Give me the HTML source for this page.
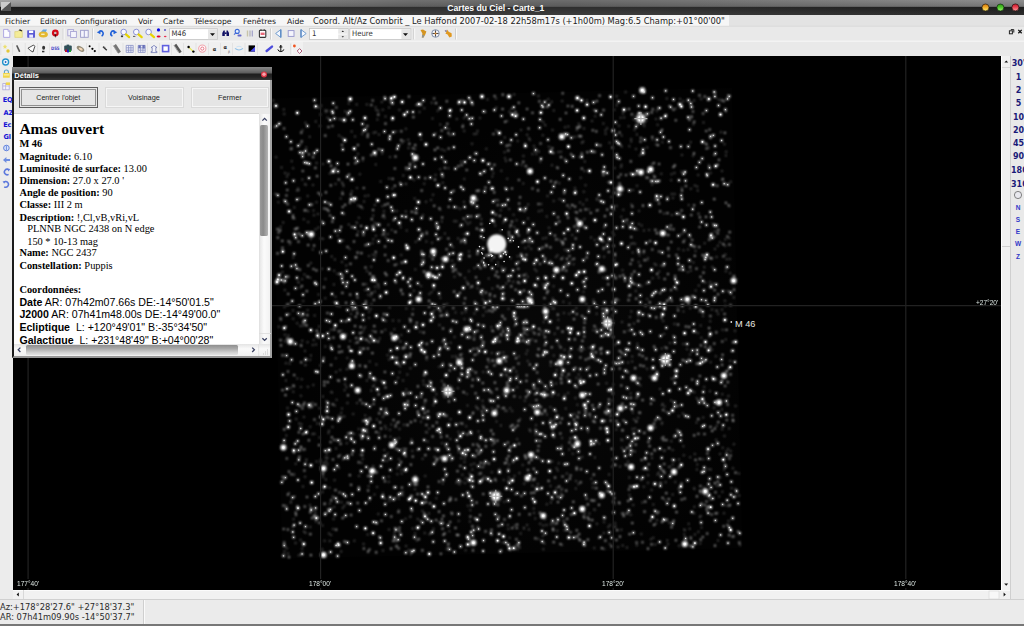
<!DOCTYPE html>
<html><head><meta charset="utf-8"><title>Cartes du Ciel - Carte_1</title>
<style>
html,body{margin:0;padding:0;background:#ebebeb;overflow:hidden}
#w{position:relative;width:1024px;height:626px;overflow:hidden;background:#ebebeb;font-family:"DejaVu Sans","Liberation Sans",sans-serif}
#w div,#w span,#w svg{position:absolute;box-sizing:border-box}
.t{white-space:nowrap;line-height:1}
#title{left:0;top:0;width:1024px;height:15px;background:linear-gradient(rgba(0,0,0,0) 0,rgba(0,0,0,.16) 6.3px,rgba(0,0,0,0) 7.3px,rgba(255,255,255,.07) 15px),linear-gradient(90deg,#a6a6a6,#707070 40%,#6c6c6c 55%,#8e8e8e) 0 0/100% 6.8px no-repeat,linear-gradient(90deg,#1a1a1a,#2e2e2e 40%,#2e2e2e 60%,#1c1c1c)}
#title .t{left:447.3px;top:2.62px;font:bold 8.6px "Liberation Sans",sans-serif;color:#fff}
#menu{left:0;top:15px;width:1024px;height:11px;background:#e3e3e3}
#menu .bg{left:0;top:0;width:729px;height:11px;background:#f6f6f6}
#menu .t{top:2.08px;font-size:8.3px;color:#222}
#tb1{left:0;top:26px;width:1024px;height:30px;background:#e9e9e9}
#map{left:13px;top:56px;width:988px;height:534px;background:#000;overflow:hidden}
#left{left:0;top:56px;width:13px;height:543px;background:#ececec}
#vs{left:1001px;top:56px;width:9px;height:534px;background:#f1f1f1;border-left:1px solid #fff}
#hs{left:13px;top:590px;width:997px;height:9px;background:#f1f1f1}
#right{left:1010px;top:56px;width:14px;height:543px;background:#e9e9e9;border-left:1px solid #cfcfcf}
#status{left:0;top:599px;width:1024px;height:27px;background:#ebebeb;border-top:1px solid #d0d0d0;border-bottom:2px solid #777}
#status .t{left:0;font-size:8.3px;color:#2a2a2a}
.ui{font-family:"DejaVu Sans Condensed","DejaVu Sans",sans-serif}
.lb{font:7.8px "Liberation Sans",sans-serif;color:#dce6e2;transform:scaleX(.84);transform-origin:0 0}
</style></head><body><div id="w">
<div id="title"><div class="t">Cartes du Ciel - Carte_1</div>
<svg style="left:0;top:0" width="1024" height="15"><path d="M1 2L11 2L1 11Z" fill="#ccc"/><path d="M11 2L11 11L1 11Z" fill="#555"/>
<defs><linearGradient id="go" x1="0" y1="0" x2="0" y2="1"><stop offset="0" stop-color="#d87808"/><stop offset=".45" stop-color="#f0a828"/><stop offset="1" stop-color="#fff070"/></linearGradient><linearGradient id="gg" x1="0" y1="0" x2="0" y2="1"><stop offset="0" stop-color="#2c9810"/><stop offset=".45" stop-color="#4cc428"/><stop offset="1" stop-color="#a0f870"/></linearGradient><linearGradient id="gr" x1="0" y1="0" x2="0" y2="1"><stop offset="0" stop-color="#c81828"/><stop offset=".45" stop-color="#e84050"/><stop offset="1" stop-color="#ffa0a0"/></linearGradient></defs><circle cx="985.5" cy="7.5" r="3.5" fill="url(#go)" stroke="#2a2010" stroke-width=".7"/><circle cx="1000.4" cy="7.5" r="3.5" fill="url(#gg)" stroke="#102a10" stroke-width=".7"/><circle cx="1015.4" cy="7.4" r="3.5" fill="url(#gr)" stroke="#2a1010" stroke-width=".7"/></svg>
</div>
<div id="menu"><div class="bg"></div>
<div class="t" style="left:5px;font-size:7.7px;top:2.59px">Fichier</div>
<div class="t" style="left:40px;font-size:7.7px;top:2.59px">Edition</div>
<div class="t" style="left:75px;font-size:7.7px;top:2.59px">Configuration</div>
<div class="t" style="left:138px;font-size:7.7px;top:2.59px">Voir</div>
<div class="t" style="left:163px;font-size:7.7px;top:2.59px">Carte</div>
<div class="t" style="left:194px;font-size:7.7px;top:2.59px">Télescope</div>
<div class="t" style="left:243px;font-size:7.7px;top:2.59px">Fenêtres</div>
<div class="t" style="left:287px;font-size:7.7px;top:2.59px">Aide</div>
<div class="t" style="left:313px">Coord. Alt/Az Combrit _ Le Haffond 2007-02-18 22h58m17s (+1h00m) Mag:6.5 Champ:+01°00'00"</div>
</div>
<div id="tb1"><svg style="left:0;top:-1px" width="1024" height="31" viewBox="0 25 1024 31"><rect x="0" y="41.5" width="303" height="14.5" fill="#f0f0f0"/><path d="M0 41.2H1024" stroke="#f8f8f8" stroke-width="1"/><path d="M0 26.3H1024" stroke="#d8d8d8" stroke-width=".8"/><path d="M63.1 28.5V39.5" stroke="#cfcfcf" stroke-width="1"/><path d="M64.1 28.5V39.5" stroke="#fafafa" stroke-width="1"/><path d="M92.5 28.5V39.5" stroke="#cfcfcf" stroke-width="1"/><path d="M93.5 28.5V39.5" stroke="#fafafa" stroke-width="1"/><path d="M270.5 28.5V39.5" stroke="#cfcfcf" stroke-width="1"/><path d="M271.5 28.5V39.5" stroke="#fafafa" stroke-width="1"/><path d="M413.7 28.5V39.5" stroke="#cfcfcf" stroke-width="1"/><path d="M414.7 28.5V39.5" stroke="#fafafa" stroke-width="1"/><path d="M455.5 28.5V39.5" stroke="#cfcfcf" stroke-width="1"/><path d="M456.5 28.5V39.5" stroke="#fafafa" stroke-width="1"/><path d="M291.0 43.5V54.5" stroke="#cfcfcf" stroke-width="1"/><path d="M292.0 43.5V54.5" stroke="#fafafa" stroke-width="1"/><path d="M0.8 43V55M12.6 43V55M25.2 43V55M37.6 43V55M49.5 43V55M61.5 43V55M74.0 43V55M86.5 43V55M99.0 43V55M111.0 43V55M123.0 43V55M135.5 43V55M147.5 43V55M159.5 43V55M171.5 43V55M183.5 43V55M196.0 43V55M208.5 43V55M220.5 43V55M232.5 43V55M245.0 43V55M257.5 43V55" stroke="#dcdcdc" stroke-width=".7" fill="none"/><path d="M3.6 29.4H8L9.8 31.4V37.4H3.6Z" fill="#fcfcff" stroke="#a8a0e0" stroke-width=".9"/><path d="M8 29.4V31.4H9.8" fill="none" stroke="#a8a0e0" stroke-width=".7"/><path d="M14.8 31.6H18L18.8 30.4H22.3V37.4H14.8Z" fill="#f4ec98" stroke="#d8cc70" stroke-width=".6"/><path d="M18.6 30.2L20 29.2L22.2 30.4L21.8 31.4Z" fill="#222"/><rect x="27.2" y="30.2" width="7.8" height="7.5" rx=".6" fill="#5a5ad4"/><rect x="29" y="30.6" width="4.2" height="2.4" fill="#fff"/><rect x="29.2" y="34.6" width="3.8" height="3.1" fill="#e8e8ff"/><path d="M41 32L43 29.6H47L45.6 32.4Z" fill="#68a8e8"/><ellipse cx="43.3" cy="34.6" rx="4.6" ry="3" fill="#e4b830"/><rect x="41.2" y="33.6" width="3.4" height="1.4" fill="#f8f0c0"/><circle cx="55.3" cy="33" r="3.4" fill="#d40818"/><circle cx="55.3" cy="33" r="1.3" fill="#c8c0c0"/><path d="M54.5 34.5L55.3 38L56.1 34.5Z" fill="#111"/><rect x="67.8" y="29.6" width="5.8" height="6.2" fill="#f0f0f8" stroke="#a8a4d4" stroke-width=".9"/><rect x="70.6" y="31.5" width="5.8" height="6" fill="#f4f4fc" stroke="#a8a4d4" stroke-width=".9"/><rect x="80.6" y="30.3" width="7.6" height="7" fill="#f4f4fc" stroke="#9898c8" stroke-width=".9"/><path d="M84.3 30.3V37.3" stroke="#9898c8" stroke-width=".9"/><path d="M99.5 31.2A2.6 2.6 0 1 1 101.6 36" fill="none" stroke="#2060d8" stroke-width="1.6"/><path d="M96.8 32.2L100.6 30.2L100.4 34.2Z" fill="#2060d8"/><path d="M114.5 31.2A2.6 2.6 0 1 0 112.4 36" fill="none" stroke="#2060d8" stroke-width="1.6"/><path d="M117.2 32.2L113.4 30.2L113.6 34.2Z" fill="#2060d8"/><circle cx="123.7" cy="32" r="2.8" fill="#f8f8ff" stroke="#8088d4" stroke-width=".9"/><path d="M125.9 34.4L129.1 37.2" stroke="#e8d400" stroke-width="2.2" stroke-linecap="round"/><circle cx="136.3" cy="32" r="2.8" fill="#f8f8ff" stroke="#8088d4" stroke-width=".9"/><path d="M138.5 34.4L141.7 37.2" stroke="#e8d400" stroke-width="2.2" stroke-linecap="round"/><circle cx="148.6" cy="32" r="2.8" fill="#f8f8ff" stroke="#8088d4" stroke-width=".9"/><path d="M150.8 34.4L154.0 37.2" stroke="#e8d400" stroke-width="2.2" stroke-linecap="round"/><path d="M122 35V37.3M120.9 36.4H123.1" stroke="#111" stroke-width=".8"/><path d="M133 36.4H135.4" stroke="#333" stroke-width=".8"/><circle cx="158.5" cy="29.9" r="1.6" fill="#0808e8"/><circle cx="165" cy="29.9" r="1" fill="#5050c8"/><ellipse cx="158.6" cy="36.5" rx="2" ry="1.1" fill="#e80030"/><ellipse cx="165.2" cy="36.5" rx="1.3" ry=".8" fill="#e83050"/><rect x="169.5" y="28.7" width="48" height="10.8" fill="#fff" stroke="#c4c4c4" stroke-width=".8"/><rect x="208" y="29.3" width="9.1" height="9.8" fill="#e6e6e6"/><path d="M210 33.3H215L212.5 35.9Z" fill="#111"/><path d="M222.3 36V33L223.6 30.6H224.8V36ZM229 36V33L227.7 30.6H226.5V36Z" fill="#101064"/><rect x="224.6" y="32.4" width="2" height="1.6" fill="#101064"/><circle cx="237.2" cy="31.4" r="2" fill="#e8f0ff" stroke="#3868d8" stroke-width="1.1"/><path d="M234 34.6L235.8 33" stroke="#5070d8" stroke-width="1.1"/><rect x="237.5" y="34.4" width="4" height="2.2" rx=".8" fill="#6468c8"/><path d="M247.5 30.5V36.5" stroke="#c8c4a8" stroke-width="1.4"/><path d="M250 30.5V36.5" stroke="#b0b0b8" stroke-width="1.2"/><path d="M252.3 30.5V36.5" stroke="#a0a0c8" stroke-width="1.2"/><rect x="259.4" y="30.2" width="6.4" height="7.2" rx=".8" fill="#fff" stroke="#333" stroke-width="1.1"/><rect x="260.6" y="32.6" width="4" height="2.4" fill="#e86878"/><path d="M261 29.2V31M264.2 29.2V31" stroke="#333" stroke-width=".9"/><path d="M275.6 33.5L280.8 29.6V37.4Z" fill="#f4f8ff" stroke="#6494cc" stroke-width=".9"/><path d="M280.8 29.6V37.4" stroke="#5888c4" stroke-width="1.3"/><rect x="288.2" y="30.6" width="5.8" height="5.8" fill="#f4f4fc" stroke="#9494cc" stroke-width=".9"/><path d="M306.2 33.5L301 29.6V37.4Z" fill="#f4f8ff" stroke="#6494cc" stroke-width=".9"/><path d="M301 29.6V37.4" stroke="#5888c4" stroke-width="1.3"/><rect x="309.5" y="28.5" width="38.6" height="11" fill="#fff" stroke="#c4c4c4" stroke-width=".8"/><rect x="338.2" y="29.1" width="9.3" height="4.6" fill="#e8e8e8"/><rect x="338.2" y="34.5" width="9.3" height="4.6" fill="#e8e8e8"/><path d="M341.6 32L342.8 30.6L344 32ZM341.6 36.2L342.8 37.6L344 36.2Z" fill="#222"/><rect x="349.8" y="28.7" width="61" height="10.8" fill="#fff" stroke="#c4c4c4" stroke-width=".8"/><rect x="401.4" y="29.3" width="9" height="9.8" fill="#e6e6e6"/><path d="M403 33.3H408L405.5 35.9Z" fill="#111"/><path d="M420.5 30L423 29.4L426.4 31.6L425.4 34.2L423.6 37.4H421.8L422.4 33.6Z" fill="#d49420"/><path d="M421.8 37.4L422.4 34.6L424.4 35.4L423.6 37.4Z" fill="#8c9498"/><circle cx="435.5" cy="33.5" r="3.8" fill="#f0f0f4" stroke="#7484a4" stroke-width=".9"/><path d="M435.5 30.4V36.6M432.4 33.5H438.6" stroke="#333" stroke-width=".9"/><circle cx="435.5" cy="33.5" r="1" fill="#e89030"/><path d="M445 30L447 31L447.4 29.6L448.6 31.8L451.6 33.2L451.8 36.6L449.4 37.6L447.6 34.4L445.4 33.4L446.4 32Z" fill="#e09820"/><path d="M444.6 30.4L446.4 29.8L447 31.6L445.4 32Z" fill="#9088a8"/><path d="M5 44.2L5.7 45.8L7.3 46L6.1 47.1L6.4 48.7L5 47.9L3.6 48.7L3.9 47.1L2.7 46L4.3 45.8Z" fill="#ece070"/><circle cx="8" cy="51" r="1.7" fill="#e4c838"/><path d="M17 46L19.4 51.2" stroke="#585858" stroke-width="1.7" stroke-linecap="round"/><path d="M28 48.2L33.6 45L34.8 46.4L33 52L30.4 50.6Z" fill="#fdfdfd" stroke="#222" stroke-width=".8"/><ellipse cx="43.6" cy="47.8" rx="1.5" ry="2" fill="#333"/><rect x="42" y="50.8" width="2.4" height="1.5" fill="#333"/><text x="51" y="50.3" font-family="'DejaVu Sans',sans-serif" font-weight="bold" font-size="4.6" fill="#4848c8" textLength="8.6" lengthAdjust="spacingAndGlyphs">DSS</text><rect x="64.2" y="45.6" width="7.6" height="5.4" rx="1" fill="#305058"/><rect x="66.6" y="44.6" width="2.6" height="1.6" fill="#305058"/><rect x="65" y="49.6" width="2" height="2.4" fill="#c01030"/><rect x="67" y="49.8" width="2" height="2.6" fill="#2020c0"/><rect x="69" y="49.6" width="2" height="2.4" fill="#20a030"/><ellipse cx="80.5" cy="48.8" rx="4.2" ry="2.2" transform="rotate(32 80.5 48.8)" fill="#948c78"/><ellipse cx="80.7" cy="49" rx="2.2" ry="1.1" transform="rotate(32 80.7 49)" fill="#f4d8b8"/><circle cx="89.6" cy="46.3" r="1" fill="#000"/><circle cx="92.4" cy="48.8" r="1.1" fill="#000"/><circle cx="94.8" cy="51.1" r="1.1" fill="#000"/><path d="M103 46.8L106.8 50.2" stroke="#333" stroke-width="1.3"/><path d="M103 46.8L105.4 47.4" stroke="#555" stroke-width=".8"/><path d="M114.6 45L119.6 52.6" stroke="#747474" stroke-width="3.2"/><path d="M113.2 45.4L118 53" stroke="#a0a0a0" stroke-width=".8"/><path d="M126.2 45.4h7v7h-7zM128.6 45.4v7M130.9 45.4v7M126.2 47.8h7M126.2 50.2h7" fill="#f4f4fc" stroke="#8890c4" stroke-width=".8"/><path d="M138.2 45.4h7v7h-7zM140.6 45.4v7M142.9 45.4v7M138.2 47.8h7M138.2 50.2h7" fill="#f4f4fc" stroke="#8890c4" stroke-width=".8"/><path d="M138.4 45.2h2.2v3h-2.2zM142.6 45h2.2v3.4h-2.2z" fill="#6870b8"/><path d="M154 45.4L157 47.6H155.8V51.6H157V52.6H151V51.6H152.2V47.6H151Z" fill="#f4f4fc" stroke="#7078b4" stroke-width=".8"/><rect x="162.6" y="45.6" width="6" height="6" fill="#fff" stroke="#6060e0" stroke-width="1.6"/><path d="M175.2 44.6L180.6 52.4" stroke="#555" stroke-width="2.6"/><path d="M173.8 45.2L178.6 52.6" stroke="#999" stroke-width=".8"/><path d="M188.6 47L193.4 51.6" stroke="#e4e850" stroke-width="1.1"/><circle cx="188.6" cy="47" r="1.2" fill="#000"/><circle cx="193.4" cy="51.6" r="1.2" fill="#000"/><circle cx="202.3" cy="48.6" r="3.6" fill="#fff" stroke="#f0a4ac" stroke-width="1.1"/><circle cx="202.3" cy="48.6" r="1.6" fill="#fff" stroke="#e46878" stroke-width=".9"/><text x="212.8" y="51" font-family="'DejaVu Sans',sans-serif" font-weight="bold" font-size="5" fill="#222">α</text><text x="223.4" y="49.4" font-family="'DejaVu Sans',sans-serif" font-weight="bold" font-size="5" fill="#222">α</text><text x="228" y="52.6" font-family="'DejaVu Sans',sans-serif" font-size="3.4" fill="#666">β</text><path d="M235 48.4Q239 51.6 243 48.4" fill="none" stroke="#90c0e8" stroke-width="1.2"/><path d="M236.4 47Q239 45.4 241.6 47" fill="none" stroke="#c8e0f4" stroke-width=".9"/><rect x="248.6" y="45.4" width="6.4" height="6.2" fill="#000"/><path d="M255 46.8V51.6H250Z" fill="#5050f4"/><path d="M266.6 51L272 46.6" stroke="#4c4cdc" stroke-width="2.4" stroke-linecap="round"/><path d="M280.8 45.6V51.6M279.2 47H282.4M277.8 49.4Q278.4 51.6 280.8 51.6Q283.2 51.6 283.8 49.4" fill="none" stroke="#111" stroke-width="1"/><circle cx="280.8" cy="45.8" r=".8" fill="#111"/><circle cx="294.4" cy="46" r="1.4" fill="#f05420"/><path d="M299.6 48.6L302 51L299.6 53.4L297.2 51Z" fill="#fff" stroke="#a04868" stroke-width=".9"/></svg><div class="t ui" style="left:171.4px;top:3.89px;font-size:7.7px;color:#333">M46</div><div class="t ui" style="left:312px;top:3.89px;font-size:7.7px;color:#333">1</div><div class="t ui" style="left:352px;top:3.89px;font-size:7.7px;color:#333">Heure</div></div>
<svg style="left:1004px;top:26px" width="20" height="12"><rect x="5.4" y="4.8" width="3" height="3" fill="none" stroke="#222" stroke-width="1"/><path d="M6.8 3.6H9.8V6.6" fill="none" stroke="#222" stroke-width="1"/><path d="M14.3 3.9L17.7 7.3M17.7 3.9L14.3 7.3" stroke="#111" stroke-width="1.3"/></svg>
<div id="left"><svg style="left:0;top:0" width="13" height="200" viewBox="0 56 13 200"><circle cx="5.6" cy="62" r="3" fill="#fff" stroke="#2494cc" stroke-width="1.4"/><path d="M4.8 60.6L7 62L4.8 63.4Z" fill="#2060c0"/><path d="M4.4 73V72A2 2 0 0 1 8.4 72V73" fill="none" stroke="#60a4c8" stroke-width="1.1"/><rect x="3" y="73" width="6.8" height="4.8" rx=".6" fill="#f0d448"/><rect x="3.6" y="74.4" width="5.6" height="1" fill="#fff8c0"/><rect x="2.8" y="83.6" width="6.4" height="6.2" fill="#f4f4fc" stroke="#b0a8d8" stroke-width=".8"/><path d="M2.8 86H9.2M5.6 83.6V89.8" stroke="#b0a8d8" stroke-width=".7"/><rect x="5.8" y="82.4" width="4.2" height="2.6" fill="#f0d448"/><circle cx="6.4" cy="148" r="2.8" fill="#d8e4fc" stroke="#6484dc" stroke-width="1"/><path d="M6.4 145.6V150.4" stroke="#6484dc" stroke-width=".9"/><path d="M3 160L6.4 157V159H10V161H6.4V163Z" fill="#6c8ce0"/><path d="M8.6 169.6A2.8 2.8 0 1 0 8.6 174.4" fill="none" stroke="#5c78dc" stroke-width="1.5"/><path d="M7 168.4L10.2 169L8.6 171.4Z" fill="#5c78dc"/><path d="M4.2 182A2.8 2.8 0 1 1 4.2 186.8" fill="none" stroke="#5c78dc" stroke-width="1.5"/><path d="M5.8 180.8L2.6 181.4L4.2 183.8Z" fill="#5c78dc"/></svg><div class="t" style="left:2.8px;top:40.02px;font:bold 6.6px 'DejaVu Sans',sans-serif;color:#1414d4;letter-spacing:-.3px">EQ</div><div class="t" style="left:3.6px;top:52.62px;font:bold 6.6px 'DejaVu Sans',sans-serif;color:#1414d4;letter-spacing:-.3px">AZ</div><div class="t" style="left:3.2px;top:64.62px;font:bold 6.6px 'DejaVu Sans',sans-serif;color:#1414d4;letter-spacing:-.3px">Ec</div><div class="t" style="left:3.6px;top:76.62px;font:bold 6.6px 'DejaVu Sans',sans-serif;color:#1414d4;letter-spacing:-.3px">Gl</div></div>
<div id="map">
<svg style="left:0;top:0" width="988" height="534" viewBox="0 0 988 534"><defs><filter id="bl" filterUnits="userSpaceOnUse" x="0" y="0" width="988" height="534"><feGaussianBlur stdDeviation="0.8"/></filter><filter id="b2" filterUnits="userSpaceOnUse" x="0" y="0" width="988" height="534"><feGaussianBlur stdDeviation="0.4"/></filter><radialGradient id="hz" gradientUnits="userSpaceOnUse" cx="522" cy="300" r="230"><stop offset="0" stop-color="#080808"/><stop offset=".55" stop-color="#050505"/><stop offset="1" stop-color="#020202"/></radialGradient></defs><rect x="264" y="37.25" width="460" height="460" fill="url(#hz)" transform="rotate(-1.3 494 267.25)"/><g filter="url(#bl)" fill="none" stroke-linecap="round"><path d="M548.8 80.7h0M402.3 101.7h0M517.0 115.3h0M627.9 116.3h0M637.6 113.4h0M606.9 132.9h0M460.4 142.2h0M629.3 34.3h0M566.8 167.6h0M649.8 177.3h0M420.3 195.4h0M432.5 203.2h0M298.3 178.3h0M720.6 224.7h0M674.3 243.3h0M543.4 214.0h0M588.8 213.0h0M415.5 218.8h0M517.0 244.7h0M532.6 255.5h0M569.3 243.3h0M405.7 243.3h0M381.3 282.1h0M453.5 273.3h0M446.2 306.5h0M486.3 305.0h0M547.3 306.5h0M493.6 334.3h0M344.7 334.3h0M338.8 309.9h0M330.0 280.6h0M620.5 322.1h0M641.5 322.1h0M710.9 319.7h0M481.4 357.3h0M524.3 356.3h0M569.3 339.2h0M607.4 352.4h0M378.8 389.0h0M564.4 388.0h0M518.0 398.8h0M431.6 402.7h0M402.3 423.7h0M514.6 422.2h0M618.1 411.0h0M661.0 415.9h0M692.3 435.4h0M277.3 285.5h0M270.4 391.5h0M310.5 412.5h0M359.3 414.9h0M530.2 459.8h0M569.3 453.0h0M460.4 486.7h0M671.8 488.1h0M310.5 498.9h0M588.8 439.3h0M706.0 346.5h0M637.6 372.0h0" stroke="#2c2c2c" stroke-width="8"/><path d="M627.9 62.6h0M594.7 267.0h0M652.3 303.6h0M435.0 335.3h0M482.8 440.3h0" stroke="#3c3c3c" stroke-width="13"/><path d="M472.8 295.1h0M478.4 271.2h0M349.7 276.0h0M623.9 78.4h0M309.8 413.3h0M289.2 492.8h0M565.7 318.6h0M272.2 285.3h0M349.5 152.3h0M476.9 240.4h0M504.2 331.3h0M567.9 246.0h0M727.0 489.0h0M587.2 180.5h0M392.9 72.7h0M452.0 427.0h0M707.3 421.5h0M365.3 458.1h0M712.9 215.3h0M556.2 393.4h0M608.2 89.7h0M306.8 69.9h0M347.0 297.7h0M354.8 376.6h0M555.8 90.2h0M630.9 174.4h0M360.4 221.8h0M360.2 159.5h0M413.6 175.8h0M307.2 309.4h0M539.0 207.5h0M704.1 255.0h0M658.5 118.2h0M684.3 408.5h0M354.5 380.1h0M359.8 476.5h0M540.6 230.2h0M287.6 483.9h0M585.1 153.9h0M536.0 171.7h0M590.4 67.5h0M524.8 428.0h0M397.7 460.6h0M270.2 166.6h0M289.4 123.6h0M523.2 97.8h0M678.0 483.2h0M582.4 303.9h0M590.8 477.1h0M556.2 257.7h0M416.3 497.8h0M517.6 375.3h0M604.7 358.1h0M682.5 195.1h0M681.4 433.0h0M630.8 430.7h0M550.0 212.1h0M539.5 73.9h0M723.8 436.0h0M445.4 376.0h0M470.3 422.8h0M603.7 49.3h0M482.5 143.9h0M493.9 319.7h0M377.1 46.0h0M572.5 129.2h0M681.4 336.3h0M671.6 183.9h0M355.2 238.7h0M687.6 437.1h0M530.1 182.4h0M495.9 421.6h0M595.4 471.1h0M342.0 248.1h0M362.2 230.8h0M654.3 484.4h0M286.2 367.5h0M409.6 402.7h0M326.8 250.4h0M642.2 143.6h0M287.9 331.1h0M555.1 336.9h0M705.8 347.0h0M479.3 120.4h0M483.5 365.6h0M388.2 199.0h0M504.5 319.4h0M448.3 402.0h0M309.5 469.6h0M324.1 249.8h0M680.4 206.6h0M670.8 399.2h0M479.0 336.9h0M598.9 410.7h0M719.0 480.8h0M655.3 194.2h0M467.5 290.9h0M483.4 51.4h0M297.5 409.1h0M421.4 400.8h0M333.3 278.5h0M651.6 350.4h0M495.3 473.0h0M366.7 282.4h0M600.2 328.5h0M652.0 291.1h0M443.2 426.6h0M364.1 430.9h0M505.9 300.4h0M510.5 268.3h0M282.6 487.1h0M451.6 406.1h0M491.9 354.8h0M685.5 157.2h0M322.5 240.8h0M677.2 252.3h0M353.9 324.4h0M327.2 399.0h0M351.1 145.5h0M411.0 202.9h0M315.5 377.1h0M496.2 152.9h0M507.2 238.0h0M454.7 281.6h0M360.0 330.4h0M511.2 427.8h0M654.6 141.1h0M640.4 448.4h0M413.7 462.7h0M726.2 439.5h0M377.0 373.7h0M312.9 423.5h0M622.9 93.0h0M573.8 44.5h0M581.8 453.7h0M318.0 273.8h0M497.2 352.2h0M293.3 91.4h0M517.8 273.5h0M328.9 126.5h0M654.9 488.2h0M479.4 388.9h0M479.0 274.6h0M535.2 43.3h0M648.3 117.7h0M602.6 221.4h0M340.8 276.5h0M677.2 401.3h0M660.5 322.7h0M608.8 392.0h0M454.9 449.8h0M586.0 387.6h0M453.2 370.2h0M421.2 254.6h0M429.3 332.3h0M376.0 473.6h0M421.4 342.1h0M561.2 357.9h0M708.9 43.8h0M600.8 153.3h0M285.0 132.5h0M530.3 493.2h0M631.3 70.0h0M338.0 257.9h0M493.1 318.2h0M697.1 226.3h0M537.4 204.7h0M565.7 293.4h0M591.1 171.6h0M372.5 60.5h0M609.5 214.2h0M640.1 311.4h0M550.4 245.7h0M289.2 284.8h0M469.6 344.7h0M385.9 307.4h0M703.7 369.8h0M321.3 451.1h0M549.8 201.5h0M579.4 295.0h0M557.6 381.9h0M384.0 489.5h0M662.7 52.5h0M388.3 235.4h0M312.4 290.5h0M306.5 352.3h0M552.7 207.8h0M359.9 198.7h0M644.6 68.8h0M636.9 320.7h0M361.9 235.6h0M634.5 204.0h0M716.2 182.2h0M611.1 457.4h0M296.7 80.7h0M489.0 352.3h0M615.7 70.3h0M563.9 74.0h0M599.0 353.7h0M329.0 205.9h0M428.8 93.4h0M530.1 458.2h0M682.6 234.6h0M402.7 185.8h0M697.1 443.5h0M429.3 207.1h0M445.0 216.9h0M526.3 402.6h0M648.7 292.5h0M616.5 439.0h0M275.4 279.4h0M529.7 480.1h0M628.8 64.5h0M621.6 73.8h0M606.7 447.5h0M551.7 102.8h0M559.6 149.1h0M615.7 274.4h0M572.9 262.6h0M597.3 360.3h0M456.5 417.6h0M659.0 403.6h0M676.7 472.8h0M507.1 363.2h0M457.3 231.6h0M609.6 489.6h0M338.8 135.3h0M403.7 484.5h0M402.3 92.9h0M617.0 117.6h0M476.0 306.2h0M277.6 92.9h0M361.8 149.0h0M534.5 139.9h0M390.3 119.6h0M408.3 291.3h0M682.0 190.6h0M703.1 254.5h0M292.5 476.8h0M441.6 281.1h0M395.9 494.1h0M368.8 46.0h0M438.3 404.5h0M539.0 109.2h0M409.9 158.9h0M387.4 285.5h0M612.6 36.1h0M655.9 411.1h0M390.9 368.8h0M537.4 430.0h0M310.1 420.9h0M514.1 278.6h0M644.1 177.4h0M297.9 182.7h0M591.1 200.8h0M312.4 222.9h0M711.2 413.4h0M269.4 216.1h0M374.5 299.3h0M275.0 497.4h0M360.9 323.4h0M437.6 286.7h0M418.4 219.6h0M379.4 132.4h0M420.5 472.8h0M594.7 187.8h0M303.6 107.0h0M577.5 360.8h0M452.8 422.5h0M303.5 146.3h0M320.9 228.5h0M685.8 229.5h0M564.2 387.9h0M440.0 191.2h0M271.1 226.8h0M717.7 394.9h0M538.7 45.7h0M423.3 337.9h0M438.1 272.8h0M644.1 314.9h0M620.2 449.0h0M426.5 269.0h0M596.8 487.9h0M596.1 418.6h0M699.0 320.8h0M300.5 154.6h0M430.1 251.8h0M514.5 294.6h0M640.4 310.4h0M376.1 303.6h0M350.5 292.4h0M696.9 335.2h0M574.9 374.3h0M539.2 405.4h0M356.1 255.7h0M442.7 300.3h0M500.6 158.8h0M418.6 333.9h0M539.5 252.4h0M552.7 352.6h0M652.6 426.3h0M464.4 298.1h0M506.2 278.4h0M677.3 180.9h0M601.4 448.1h0M541.3 381.6h0M532.3 69.3h0M469.7 269.0h0M290.9 361.1h0M372.5 181.3h0M709.3 338.3h0M461.2 407.8h0M607.6 295.3h0M313.2 405.3h0M515.9 473.4h0M374.7 178.0h0M297.8 452.7h0M445.5 202.6h0M712.3 249.8h0M404.7 462.9h0M358.1 425.1h0M717.7 125.7h0M356.7 444.5h0M316.0 374.7h0M681.1 432.3h0M328.9 360.8h0M464.5 75.0h0M407.9 365.7h0M345.2 149.4h0M625.7 205.9h0M671.0 304.4h0M407.3 464.7h0M393.3 333.6h0M714.5 234.9h0M503.4 58.7h0M392.8 155.4h0M302.7 173.2h0M375.4 168.7h0M280.1 254.5h0M445.7 465.0h0M348.0 296.2h0M431.4 341.2h0M501.7 269.7h0M347.6 398.7h0M540.7 144.9h0M622.0 395.6h0M373.0 265.0h0M530.7 265.9h0M540.6 364.6h0M661.4 116.9h0M273.2 270.5h0M464.8 159.3h0M302.5 458.2h0M516.8 400.3h0M330.1 184.4h0M410.3 324.7h0M387.2 310.3h0M637.4 113.6h0M340.2 358.1h0M620.7 63.3h0M284.2 267.2h0M712.9 99.5h0M601.4 53.7h0M668.9 99.1h0M400.8 234.8h0M285.9 499.3h0M598.4 141.1h0M515.1 148.4h0M690.6 200.5h0M715.5 313.0h0M451.2 336.8h0M424.2 358.0h0M539.5 443.2h0M448.5 425.4h0M619.9 134.0h0M349.6 293.2h0M355.3 139.6h0M579.8 431.5h0M436.0 72.9h0M428.8 165.4h0M345.9 161.7h0M690.2 361.4h0M432.5 390.4h0M675.4 43.4h0M416.8 393.0h0M289.1 223.3h0M280.1 112.2h0M277.7 186.2h0M510.4 100.1h0M386.6 373.0h0M329.4 135.8h0M590.4 221.7h0M658.7 138.0h0M420.1 138.7h0M277.6 331.9h0M640.3 481.8h0M576.4 457.4h0M659.9 141.9h0M305.5 238.4h0M291.4 218.4h0M490.4 166.5h0M449.1 256.9h0M566.9 146.4h0M420.8 233.3h0M533.9 358.6h0M580.7 46.8h0M427.3 68.5h0M290.0 269.8h0M376.1 51.6h0M674.1 293.3h0M567.7 121.7h0M551.5 474.2h0M533.5 469.0h0M553.6 321.2h0M453.0 165.6h0M278.7 105.3h0M330.5 130.1h0M573.7 143.8h0M513.0 218.2h0M492.6 336.1h0M551.6 293.8h0M706.9 186.2h0M669.0 177.8h0M639.0 108.0h0M490.4 296.6h0M398.5 383.5h0M371.0 155.2h0M346.6 276.9h0M289.5 74.3h0M583.7 87.8h0M618.4 255.6h0M665.6 432.8h0M381.4 273.2h0M446.9 367.2h0M591.0 185.7h0M616.3 421.5h0M524.1 230.2h0M553.8 417.5h0M321.1 214.8h0M367.6 125.6h0M537.7 468.3h0M328.2 356.9h0M713.1 55.5h0M314.5 61.7h0M605.0 490.9h0M411.3 52.2h0M484.9 209.5h0M635.1 419.2h0M445.6 322.3h0M713.1 211.6h0M518.2 404.2h0M380.0 264.5h0M408.3 49.0h0M332.1 328.3h0M369.1 261.9h0M379.3 64.3h0M671.8 175.9h0M361.5 438.5h0M458.1 408.7h0M292.0 295.0h0M666.1 489.8h0M649.1 366.8h0M273.9 120.5h0M297.8 207.1h0M407.2 275.7h0M366.1 480.6h0M509.7 409.0h0M600.7 218.7h0M315.9 477.6h0M276.6 307.4h0M441.5 208.6h0M634.9 202.1h0M408.1 83.3h0M601.6 132.6h0M517.0 349.3h0M309.8 107.9h0M457.2 43.4h0M447.9 186.5h0M414.6 385.5h0M364.7 228.1h0M344.1 166.8h0M697.1 181.2h0M433.7 492.9h0M554.4 210.0h0M363.5 323.5h0M658.5 322.4h0M521.0 89.9h0M580.4 243.9h0M455.9 215.3h0M540.8 299.5h0M281.1 330.4h0M537.7 309.6h0M601.0 179.1h0M717.1 217.3h0M328.2 495.5h0M375.8 425.8h0M697.8 413.5h0M504.4 493.2h0M665.7 360.3h0M634.2 243.0h0M658.2 124.3h0M555.4 70.5h0M625.4 260.0h0M635.0 426.7h0M520.8 452.5h0M333.2 209.4h0M280.3 201.5h0M642.9 88.6h0M446.6 428.3h0M361.1 329.5h0M595.1 126.2h0M457.3 46.1h0M410.8 328.6h0M543.2 355.4h0M325.7 359.8h0M542.9 200.9h0M722.6 349.9h0M428.1 181.8h0M333.4 331.0h0M639.6 222.3h0M501.6 469.4h0M584.5 143.8h0M399.4 440.1h0M658.1 344.5h0M691.4 211.3h0M539.8 242.6h0M454.7 167.9h0M700.0 167.7h0M570.1 148.6h0M329.7 452.1h0M456.0 195.5h0M655.3 305.1h0M314.7 453.0h0M430.2 211.2h0M694.9 44.3h0M478.5 204.3h0M411.5 347.4h0M449.4 418.8h0M591.2 493.0h0M475.7 222.4h0M370.0 494.4h0M430.7 105.1h0M600.4 74.0h0M563.5 322.0h0M384.3 412.3h0M616.4 90.2h0M276.0 437.0h0M670.3 45.3h0M510.8 282.3h0M624.4 173.4h0M322.8 302.2h0M305.6 277.1h0M618.4 148.4h0M287.0 142.6h0M520.2 248.0h0M316.5 431.7h0M709.6 273.8h0M549.2 432.7h0M449.3 44.1h0M642.2 371.3h0M337.1 285.0h0M563.1 425.0h0M451.2 75.1h0M320.6 463.1h0M490.6 337.9h0M699.1 293.7h0M677.8 214.7h0M601.1 154.1h0M461.4 257.4h0M461.7 245.5h0M643.1 63.1h0M514.7 220.8h0M309.1 212.8h0M483.9 143.9h0M483.1 42.5h0M702.4 36.7h0M703.6 200.9h0M431.9 177.6h0M533.0 181.7h0M504.1 383.3h0M305.0 157.9h0M628.6 230.1h0M447.0 170.2h0M309.2 493.2h0M413.4 185.4h0M627.5 329.4h0M610.0 57.5h0M522.3 462.4h0M279.8 471.1h0M525.4 40.0h0M680.4 68.3h0M469.4 383.1h0M469.4 238.9h0M414.0 376.6h0M321.6 424.2h0M512.0 89.7h0M411.7 477.0h0M684.3 130.6h0M514.2 422.2h0M664.8 250.7h0M461.6 211.9h0M690.0 259.9h0M445.6 396.0h0M601.5 112.0h0M356.0 200.0h0M426.2 310.7h0M443.7 302.4h0M430.0 307.1h0M712.3 183.5h0M369.5 160.7h0M525.8 155.2h0M641.5 207.8h0M464.4 321.8h0M716.1 449.9h0M485.2 144.4h0M309.9 182.8h0M283.2 363.0h0M515.8 190.3h0M703.2 383.8h0M312.7 401.5h0M356.7 286.4h0M323.1 392.5h0M681.3 457.2h0M436.4 475.2h0M402.0 433.2h0M383.7 154.9h0M508.5 154.0h0M377.0 101.1h0M387.7 171.2h0M502.1 438.3h0M662.3 425.9h0M516.5 373.9h0M571.6 457.6h0M434.1 400.2h0M471.1 208.4h0M697.2 265.2h0M320.1 473.0h0M302.1 455.6h0M410.6 439.6h0M565.7 67.7h0M531.5 487.6h0M659.7 394.0h0M300.7 284.0h0M504.7 200.2h0M357.6 364.3h0M483.2 74.5h0M525.3 483.0h0M324.7 179.6h0M591.1 466.1h0M704.4 457.3h0M688.2 43.0h0M537.4 351.3h0M550.3 464.5h0M507.6 477.4h0M320.1 440.3h0M271.2 57.9h0M580.5 274.3h0M615.0 405.5h0M645.7 221.5h0M418.8 46.7h0M386.0 308.9h0M420.4 349.0h0M376.3 444.9h0M331.2 158.0h0M622.1 187.8h0M562.2 155.9h0M385.7 442.4h0M369.3 179.1h0M599.5 344.6h0M508.0 73.9h0M374.1 140.7h0M716.9 203.0h0M687.3 487.5h0M330.1 403.6h0M422.9 401.9h0M397.5 312.2h0M486.3 413.3h0M492.3 212.5h0M680.1 99.7h0M671.9 474.2h0M426.1 466.1h0M596.9 469.1h0M329.0 352.6h0M602.4 470.6h0M431.6 94.6h0M690.5 66.6h0M419.5 62.4h0M344.9 97.8h0M513.2 297.8h0M510.9 471.7h0M362.7 76.3h0M617.8 458.8h0M336.7 193.1h0M476.6 314.9h0M707.9 44.5h0M443.8 63.1h0M346.7 378.9h0M271.1 143.9h0M495.2 337.2h0M343.6 48.6h0M281.6 162.4h0M433.9 256.2h0M408.8 203.5h0M530.2 228.4h0M659.6 438.5h0M503.1 489.0h0M345.7 373.0h0M390.9 84.9h0M424.6 296.0h0M687.6 269.4h0M265.8 270.8h0M529.3 326.9h0M306.2 270.4h0M563.6 481.0h0M463.5 77.7h0M375.8 420.7h0M385.8 454.2h0M489.2 259.2h0M650.2 265.1h0M352.1 140.0h0M637.9 483.3h0M581.9 401.5h0M638.9 402.0h0M636.1 173.9h0M681.1 44.4h0M425.2 402.5h0M686.7 461.0h0M296.3 348.3h0M718.6 432.3h0M352.2 359.5h0M717.4 318.5h0M620.0 395.1h0M530.3 469.6h0M489.1 214.4h0M272.0 117.0h0M371.4 340.4h0M583.2 272.5h0M386.8 126.4h0M583.9 467.8h0M693.8 451.2h0M617.8 188.1h0M504.2 261.5h0M660.4 279.7h0M603.4 150.1h0M528.3 148.0h0M292.4 66.7h0M511.0 472.5h0M453.8 225.5h0M486.8 477.7h0M465.2 352.9h0M520.7 331.3h0M675.7 149.1h0M722.0 274.8h0M611.2 61.6h0M515.1 162.6h0M596.0 182.1h0M563.8 360.0h0M459.0 87.8h0M706.2 440.4h0M295.2 166.1h0M461.6 97.5h0M530.0 378.3h0M564.4 348.7h0M288.5 368.3h0M289.9 259.8h0M297.3 221.8h0M318.1 479.1h0M488.8 307.6h0M711.5 88.2h0M370.0 437.6h0M451.9 221.9h0M386.0 403.2h0M469.0 206.3h0M470.6 183.3h0M451.3 178.3h0M473.2 255.6h0M472.0 210.9h0M715.1 393.1h0M574.9 375.8h0M601.2 470.9h0M570.6 235.8h0M371.3 393.9h0M712.1 189.8h0M271.8 233.9h0M385.0 321.7h0M452.6 494.3h0M678.4 61.4h0M644.6 418.4h0M537.6 363.4h0M607.8 300.8h0M588.6 293.2h0M713.2 95.7h0M416.1 372.8h0M391.4 300.3h0M488.3 114.8h0M675.9 337.9h0M633.3 227.4h0M542.1 248.0h0M429.2 387.3h0M404.6 357.2h0M643.1 209.0h0M429.6 285.8h0M438.2 340.6h0M411.4 439.8h0M376.1 122.4h0M307.4 406.2h0M386.0 264.7h0M281.2 418.2h0M363.9 363.4h0M423.3 442.2h0M470.6 410.9h0M549.1 489.1h0M368.3 324.9h0M704.9 189.7h0M465.9 418.0h0M571.6 115.0h0M661.6 138.1h0M372.1 370.1h0M579.1 65.0h0M514.7 304.9h0M543.6 432.1h0M306.7 52.0h0M343.5 166.5h0M581.7 183.9h0M398.0 297.5h0M427.3 153.7h0M379.5 48.2h0M533.7 160.4h0M652.1 249.5h0M411.9 446.4h0M551.8 339.0h0M493.3 227.5h0M495.6 252.8h0M512.1 399.0h0M362.6 51.3h0M282.7 407.8h0M392.6 128.1h0M649.8 347.9h0M605.5 243.9h0M688.4 416.5h0M383.0 485.5h0M498.8 180.0h0M506.8 491.6h0M714.8 39.3h0M444.9 332.3h0M527.1 467.8h0M615.1 306.6h0M344.0 254.2h0M570.8 135.8h0M512.3 192.1h0M549.2 45.1h0M562.8 134.8h0M516.8 84.1h0M388.4 413.7h0M607.7 61.8h0M626.7 99.5h0M275.3 118.1h0M701.9 180.7h0M640.9 119.4h0M551.3 465.4h0M521.7 213.0h0M382.8 368.3h0M496.6 481.7h0M397.1 460.7h0M292.0 128.2h0M401.4 427.2h0M715.4 340.0h0M442.7 368.0h0M291.9 268.2h0M503.5 60.3h0M713.8 203.3h0M333.9 313.3h0M347.6 270.7h0M616.4 294.3h0M354.2 373.3h0M656.1 49.8h0M482.8 425.1h0M609.3 384.2h0M292.1 420.8h0M334.6 59.0h0M665.4 208.8h0M290.0 430.6h0M679.8 51.1h0M393.1 128.0h0M358.3 334.6h0M342.6 287.0h0M334.3 302.1h0M442.5 256.6h0M543.5 125.7h0M273.3 449.9h0M324.3 217.7h0M437.6 363.3h0M281.5 173.3h0M611.5 394.8h0M685.2 118.9h0M658.4 385.2h0M716.2 372.4h0M677.0 298.4h0M726.0 417.4h0M701.1 99.3h0M519.5 97.9h0M294.9 330.8h0M414.0 318.0h0M383.9 208.2h0M355.6 430.3h0M518.3 193.1h0M260.3 44.4h0M396.2 494.6h0M297.2 370.7h0M487.9 369.4h0M692.5 226.5h0M445.1 182.6h0M479.0 352.6h0M628.3 478.0h0M543.9 111.3h0M451.3 123.1h0M287.6 87.9h0M478.8 416.2h0M519.6 429.8h0M318.3 336.1h0M365.2 54.8h0M294.6 286.2h0M544.7 414.6h0M321.9 349.6h0M670.4 288.0h0M399.3 395.1h0M474.5 43.6h0M386.7 316.2h0M494.2 65.1h0M625.9 168.1h0M499.8 406.4h0M686.4 255.5h0M285.2 226.0h0M571.8 105.4h0M460.0 314.8h0M466.5 174.0h0M668.8 131.9h0M670.5 255.4h0M331.4 449.8h0M296.4 352.0h0M470.3 315.9h0M691.7 187.3h0M618.2 85.4h0M563.3 252.0h0M624.0 129.8h0M541.0 252.6h0M681.8 129.4h0M303.1 465.6h0M546.2 183.8h0M681.8 398.1h0M492.1 102.3h0M703.9 429.7h0M515.9 183.1h0M608.3 383.5h0M459.5 358.0h0M473.3 92.8h0M346.1 420.1h0M558.7 203.7h0M350.6 487.9h0M326.1 363.9h0M548.7 389.7h0M671.3 478.4h0M560.6 208.2h0M434.2 336.1h0M429.8 427.6h0M578.3 422.8h0M556.7 151.9h0M314.2 408.1h0M402.4 213.6h0M331.6 334.2h0M301.0 159.2h0M372.4 443.0h0M478.7 130.9h0M457.1 166.5h0M280.3 335.7h0M411.2 127.8h0M303.5 405.4h0M271.5 250.9h0M406.5 56.1h0M431.9 485.0h0M691.3 431.4h0M325.9 412.1h0M516.0 82.3h0M533.8 448.3h0M613.6 331.3h0M622.9 341.9h0M506.9 227.3h0M593.6 351.6h0M629.6 413.2h0M326.8 63.6h0M702.2 175.3h0M478.8 297.1h0M619.9 187.3h0M627.8 35.7h0M311.7 447.3h0M390.2 392.7h0M569.5 225.7h0M357.7 253.1h0M570.3 85.4h0M355.9 285.5h0M271.5 495.5h0M435.4 112.3h0M709.0 114.9h0M644.1 464.1h0M316.7 117.6h0M681.4 450.8h0M321.9 203.6h0M564.2 366.4h0M464.7 248.1h0M434.1 248.0h0M588.9 185.6h0M326.7 62.7h0M424.7 54.7h0M464.6 470.5h0M277.0 188.2h0M403.7 103.0h0M648.0 209.6h0M308.2 49.4h0M373.1 372.6h0M300.0 129.1h0M619.6 372.9h0M470.5 201.4h0M626.0 155.1h0M360.1 409.9h0M403.1 242.8h0M661.4 268.0h0M393.7 174.4h0M697.6 306.2h0M295.1 155.2h0M418.1 144.1h0M287.4 231.8h0M448.8 298.1h0M274.6 352.1h0M488.8 211.3h0M286.6 178.8h0M312.8 55.8h0M277.9 445.8h0M468.5 279.6h0M314.5 402.0h0M609.1 266.1h0M651.8 444.1h0M573.2 247.9h0M530.5 278.0h0M653.3 58.4h0M548.2 311.1h0M287.5 260.5h0M695.8 109.0h0M333.8 387.2h0M599.8 176.5h0M265.4 146.3h0M670.4 390.3h0M304.3 367.5h0M297.3 470.9h0M280.2 262.7h0M316.8 447.8h0M321.3 246.3h0M568.8 86.8h0M452.6 255.7h0M542.5 467.8h0M683.9 413.6h0M376.6 251.5h0M403.1 49.1h0M363.4 376.0h0M281.4 151.6h0M629.3 446.4h0M316.8 485.1h0M592.9 252.5h0M616.5 268.7h0M507.2 341.3h0M704.5 457.3h0M656.9 410.7h0M301.5 377.8h0M643.9 54.7h0M599.5 259.3h0M718.1 237.9h0M571.6 354.2h0M599.5 403.5h0M358.5 248.0h0M512.0 87.6h0M444.5 151.5h0M365.6 231.5h0M685.0 343.9h0M663.5 313.3h0M544.5 199.3h0M299.4 346.8h0M581.2 453.6h0M545.8 407.2h0M642.2 488.4h0M272.9 324.6h0M661.4 314.8h0M270.6 423.8h0M717.2 305.0h0M623.8 489.2h0M674.8 215.9h0M443.5 165.2h0M307.6 182.4h0M323.0 316.0h0M355.0 284.5h0M398.4 264.1h0M387.2 285.6h0M422.8 170.2h0M619.7 356.4h0M664.3 373.8h0M327.4 384.6h0M720.9 388.2h0M526.0 323.5h0M331.5 485.5h0M393.1 489.9h0M298.9 349.2h0M362.9 179.8h0M413.2 344.5h0M722.8 440.3h0M384.3 418.2h0M527.0 72.1h0M695.6 91.7h0M501.2 38.6h0M296.9 448.9h0M491.7 242.7h0M580.8 54.1h0M690.6 344.4h0M597.3 357.3h0M619.2 300.5h0M503.5 164.3h0M670.5 194.3h0M429.8 126.8h0M530.2 66.0h0M288.8 323.3h0M700.5 169.1h0M362.7 108.6h0M490.3 230.7h0M698.6 177.3h0M504.7 85.1h0M548.0 437.5h0M583.7 142.7h0M648.9 367.8h0M341.4 484.7h0M688.3 281.7h0M438.2 456.4h0M422.6 77.5h0M357.7 239.8h0M562.1 80.8h0M290.2 245.1h0M388.6 417.4h0M448.2 402.3h0M519.1 283.4h0M701.1 351.7h0M356.0 262.0h0M514.1 78.8h0M451.2 62.1h0M696.9 422.6h0M448.5 490.2h0M602.1 467.2h0M263.1 101.3h0M634.1 312.7h0M319.0 336.5h0M327.2 314.0h0M635.2 413.7h0M400.6 106.2h0M281.9 440.5h0M635.1 258.7h0M650.8 414.5h0M362.4 199.4h0M396.9 237.9h0M711.4 380.0h0M685.6 158.3h0M493.0 105.0h0M294.6 254.2h0M459.5 413.6h0M655.4 244.1h0M293.3 404.2h0M448.2 105.7h0M289.9 97.8h0M455.9 101.9h0M548.2 434.1h0M335.8 168.4h0M534.4 333.3h0M283.9 134.5h0M656.2 466.7h0M379.2 62.1h0M456.9 465.4h0M353.8 48.6h0M638.6 434.0h0M272.9 307.2h0M550.7 454.6h0M394.4 318.4h0M610.3 153.8h0M579.7 444.8h0M702.8 300.2h0M559.3 179.0h0M284.4 322.6h0M313.7 398.1h0M608.3 160.7h0M695.5 413.2h0M550.9 303.6h0M439.4 300.5h0M562.8 432.5h0M363.2 53.9h0M467.4 426.6h0M503.3 315.5h0M576.2 291.8h0M369.2 97.6h0M675.7 467.8h0M528.4 274.9h0M349.7 403.0h0M367.1 168.7h0M349.2 78.0h0M345.3 335.9h0M550.9 257.0h0M400.0 252.9h0M366.1 377.0h0M712.6 315.6h0M614.6 167.6h0M465.5 375.4h0M354.6 478.4h0M497.1 494.2h0M436.9 79.3h0M538.1 366.4h0M622.8 235.1h0M543.0 327.6h0M571.1 293.0h0M576.2 358.7h0M709.0 253.7h0M497.7 202.2h0M668.5 115.4h0M309.4 435.9h0M716.9 449.3h0M556.6 247.5h0M427.3 241.8h0M317.7 289.2h0M521.2 400.5h0M417.9 477.3h0M389.7 291.4h0M287.9 339.7h0M393.4 113.5h0M464.6 232.2h0M390.1 324.6h0M632.5 403.6h0M712.8 283.5h0M383.8 367.2h0M575.6 153.6h0M390.0 439.2h0M449.5 303.8h0M267.5 67.5h0M386.4 54.1h0M495.4 424.7h0M335.7 47.6h0M565.5 428.1h0M683.7 342.3h0M435.3 259.3h0M688.0 255.0h0M493.3 407.1h0M529.8 79.3h0M350.9 273.0h0M371.1 356.5h0M614.0 491.6h0M720.8 241.6h0M342.1 80.5h0M307.4 58.4h0M510.3 127.6h0M615.7 239.9h0M581.3 491.9h0M469.2 285.3h0M651.8 394.5h0M618.1 82.9h0M494.2 122.7h0M399.7 472.5h0M643.1 467.6h0M616.9 260.9h0M323.6 343.8h0M578.1 181.5h0M427.1 219.0h0M267.9 263.9h0M334.8 377.2h0M447.1 152.8h0M464.2 352.1h0M624.4 287.7h0M487.8 154.2h0M699.0 253.4h0M337.8 330.2h0M362.6 99.5h0M685.4 475.7h0M273.3 379.4h0M288.7 394.1h0M374.7 397.6h0M372.3 273.8h0M541.7 277.7h0M292.9 128.8h0M537.5 248.1h0M524.8 333.2h0M650.9 278.1h0M719.9 412.3h0M581.5 289.2h0M313.6 345.1h0M546.0 288.7h0M458.9 148.7h0M588.1 441.8h0M408.2 245.3h0M557.3 383.1h0M469.9 243.4h0M412.2 420.0h0M520.3 275.7h0M267.6 170.8h0M713.5 395.6h0M277.8 446.5h0M406.2 470.3h0M645.7 416.7h0M491.8 81.5h0M495.4 412.5h0M566.5 101.1h0M292.7 308.9h0M596.6 296.2h0M345.2 175.4h0M544.2 474.7h0M291.0 475.4h0M361.9 390.4h0M656.9 287.1h0M480.1 252.1h0M527.3 105.8h0M314.4 54.7h0M601.8 220.2h0M545.3 338.7h0M675.1 193.5h0M381.5 476.9h0M349.2 376.6h0M440.3 212.8h0M427.2 113.3h0M310.9 406.9h0M669.9 357.4h0M687.8 460.0h0M532.1 69.0h0M416.5 325.0h0M606.0 69.7h0M490.7 424.0h0M334.4 347.1h0M468.3 163.3h0M701.9 193.1h0M511.8 344.7h0M299.8 193.5h0M493.8 354.8h0M302.7 65.6h0M401.0 123.8h0M312.5 54.3h0M608.5 108.7h0M594.1 72.3h0M487.6 174.5h0M497.1 277.9h0M281.1 419.1h0M639.6 83.4h0M508.6 108.7h0M516.7 373.4h0M480.3 117.2h0M469.8 349.6h0M395.6 92.1h0M482.2 169.6h0M501.3 171.1h0M261.4 71.2h0M709.4 435.7h0M696.3 280.7h0M312.3 242.2h0M453.9 338.1h0M561.9 132.0h0M461.3 280.0h0M378.3 368.6h0M488.4 493.9h0M441.5 220.7h0M276.4 257.9h0M522.4 373.2h0M499.2 355.0h0M571.6 462.3h0M489.7 272.4h0M343.9 132.0h0M496.4 55.8h0M647.0 333.0h0M697.6 116.9h0M472.2 114.7h0M346.9 118.3h0M562.4 341.9h0M700.0 227.4h0M691.2 331.1h0M609.6 374.7h0M299.4 378.0h0M536.0 90.8h0M348.4 407.0h0M552.1 71.2h0M596.6 86.8h0M458.0 429.6h0M366.0 78.5h0M653.0 355.8h0M603.7 40.2h0M416.4 478.3h0M341.1 377.9h0M383.4 75.6h0M713.6 449.5h0M306.5 381.5h0M648.5 382.6h0M711.9 244.8h0M559.8 397.8h0M665.6 192.9h0M523.0 369.3h0M344.0 347.1h0M361.7 167.1h0M602.0 288.7h0M293.4 403.5h0M651.0 394.8h0M393.4 252.4h0M639.2 128.6h0M467.0 61.9h0M543.7 314.0h0M297.9 299.5h0M401.6 142.5h0M484.9 206.5h0M571.4 162.9h0M385.9 382.2h0M539.7 374.4h0M626.5 199.5h0M548.0 95.8h0M309.9 340.5h0M690.2 403.2h0M419.1 186.7h0M319.7 441.6h0M273.8 492.2h0M301.6 259.4h0M280.6 463.3h0M571.1 72.6h0M307.6 403.7h0M684.8 277.0h0M621.0 267.6h0M556.1 296.2h0M326.1 79.4h0M402.1 477.4h0M608.7 90.5h0M684.7 134.5h0M531.8 220.2h0M331.4 360.6h0M543.5 412.2h0M546.3 127.3h0M271.9 278.8h0M328.3 274.8h0M363.4 308.4h0M582.2 60.2h0M467.2 118.0h0M365.4 229.2h0M478.8 479.0h0M347.2 292.0h0M327.6 142.4h0M369.8 53.7h0M665.9 403.6h0M360.4 183.2h0M548.4 323.8h0M369.4 150.3h0M292.2 309.0h0M671.2 473.5h0M708.6 319.2h0M439.1 204.8h0M293.2 154.3h0M470.2 259.4h0M692.3 439.5h0M630.6 197.0h0M619.7 196.6h0M422.5 119.1h0M319.4 371.1h0M496.1 408.6h0M683.5 366.4h0M606.2 352.0h0M539.0 339.9h0M514.1 468.9h0M352.1 271.0h0M593.5 327.3h0M361.9 324.8h0M576.1 251.4h0M585.7 482.1h0M548.3 318.0h0M663.7 233.5h0M294.7 139.9h0M644.3 458.1h0M491.4 445.8h0M537.9 446.4h0M311.6 484.8h0M549.0 381.9h0M409.5 454.9h0M708.0 76.3h0M608.4 473.7h0M389.2 86.8h0M384.4 302.1h0M328.8 81.6h0M634.2 91.6h0M712.4 198.6h0M622.1 372.6h0M494.8 469.1h0M330.1 128.3h0M627.0 293.5h0M285.7 134.2h0M592.6 77.8h0M408.1 230.0h0M338.6 75.6h0M703.1 323.9h0M324.4 324.2h0M653.9 308.8h0M688.5 471.6h0M461.1 78.0h0M369.8 361.0h0M272.6 450.1h0M388.2 278.9h0M620.9 363.5h0M545.4 95.9h0M305.5 171.6h0M516.0 337.3h0M417.0 200.3h0M601.4 204.0h0M352.2 234.1h0M468.9 411.5h0M528.8 154.4h0M592.4 74.6h0M378.7 174.0h0M356.6 305.4h0M371.7 161.8h0M649.1 349.1h0M322.6 128.1h0M501.4 420.1h0M653.8 42.5h0M418.5 236.3h0M359.5 187.2h0M649.4 86.2h0M594.6 373.3h0M717.5 475.3h0M364.4 63.4h0M540.8 54.6h0M707.1 397.9h0M404.3 393.7h0M488.9 279.4h0M646.3 215.4h0M343.7 201.6h0M285.6 226.6h0M711.9 407.8h0M290.8 163.3h0M395.3 83.7h0M525.9 95.4h0M522.5 378.7h0M716.4 150.3h0M305.7 461.7h0M347.6 414.8h0M328.5 446.2h0M431.0 401.8h0M523.4 214.9h0M641.6 393.4h0M297.0 303.8h0M624.8 361.9h0M469.0 411.0h0M598.1 359.8h0M702.7 322.8h0M353.1 228.3h0M603.4 373.4h0M451.5 263.3h0M676.5 204.8h0M302.9 288.5h0M700.6 324.1h0M332.5 64.3h0M545.3 263.8h0M457.3 454.2h0M374.0 404.7h0M416.3 237.9h0M608.6 79.4h0M590.5 193.4h0M428.9 324.9h0M411.1 296.9h0M472.6 55.7h0M658.9 158.9h0M546.6 143.3h0M300.3 328.9h0M619.2 305.5h0M651.1 157.6h0M715.6 464.9h0M551.9 193.8h0M413.1 145.8h0M566.5 325.0h0M262.3 137.8h0M438.7 458.0h0M627.7 119.0h0M628.7 169.4h0M541.1 337.4h0M435.0 490.6h0M397.8 498.2h0M583.7 257.8h0M441.2 165.3h0M371.2 359.1h0M624.6 341.6h0M359.7 275.1h0M498.3 52.9h0M318.7 200.4h0M360.6 76.7h0M705.1 484.6h0M268.5 111.5h0M711.0 457.2h0M412.9 376.1h0M681.9 478.6h0M627.4 356.8h0M531.9 463.2h0M276.2 248.1h0M608.5 138.3h0M466.4 427.3h0M409.5 179.3h0M569.3 401.1h0M677.7 86.2h0M451.8 402.3h0M722.6 432.7h0M607.0 410.5h0M579.8 427.2h0M332.2 55.6h0M635.4 121.8h0M608.1 110.9h0M567.5 321.9h0M677.8 132.7h0M694.1 89.0h0M521.1 456.9h0M451.0 146.0h0M415.9 457.4h0M667.0 43.0h0M698.1 180.8h0M450.0 69.1h0M494.2 405.5h0M336.9 147.1h0M270.8 53.5h0M445.7 427.1h0M377.4 380.8h0M617.6 337.5h0M479.4 232.5h0M521.3 354.0h0M506.4 416.9h0M349.8 104.6h0M699.4 210.9h0M708.9 353.5h0M496.1 329.7h0M550.1 118.5h0M463.0 350.5h0M358.2 210.7h0M705.2 258.1h0M709.7 391.8h0M491.6 96.3h0M302.4 225.8h0M489.6 486.5h0M337.7 123.7h0M500.3 225.7h0M454.5 349.6h0M287.3 270.0h0M531.4 249.4h0M709.2 373.2h0M493.4 90.0h0M354.0 215.3h0M390.1 436.0h0M705.5 43.6h0M413.6 303.4h0M540.2 467.7h0M437.3 383.0h0M392.5 462.7h0M299.8 289.1h0M659.7 408.4h0M496.9 171.3h0M471.3 420.4h0" stroke="#555555" stroke-width="2.0"/><path d="M717.6 399.6h0M573.7 201.4h0M460.1 356.8h0M558.3 458.6h0M483.8 215.8h0M566.3 80.2h0M394.5 337.3h0M398.9 155.8h0M527.8 432.9h0M563.8 385.5h0M462.6 337.3h0M614.3 457.4h0M299.2 462.1h0M325.9 324.7h0M348.3 320.1h0M510.9 272.1h0M623.3 365.5h0M643.6 250.2h0M312.3 79.7h0M397.4 265.4h0M706.0 103.8h0M554.0 202.8h0M329.7 462.1h0M315.6 361.8h0M469.6 423.1h0M378.1 492.7h0M280.1 161.9h0M505.3 212.8h0M482.0 253.4h0M503.1 302.2h0M603.4 243.3h0M692.9 87.7h0M455.1 228.1h0M657.1 173.1h0M540.2 96.9h0M326.3 290.5h0M660.7 464.8h0M476.8 343.8h0M697.4 260.1h0M294.6 220.8h0M648.5 261.6h0M612.1 224.8h0M655.8 443.2h0M616.0 53.1h0M403.6 271.8h0M516.2 236.4h0M564.0 163.9h0M372.1 190.5h0M382.5 175.9h0M269.6 334.2h0M537.9 306.1h0M716.7 176.2h0M311.3 152.5h0M602.1 197.8h0M336.9 146.5h0M512.1 399.9h0M679.3 323.5h0M525.0 134.4h0M691.8 40.6h0M403.6 157.0h0M558.1 98.3h0M662.8 64.3h0M544.5 440.6h0M495.8 224.5h0M683.8 307.7h0M482.3 443.2h0M495.9 176.4h0M714.8 326.2h0M502.7 233.8h0M399.0 454.7h0M515.7 287.5h0M697.1 291.3h0M431.0 249.2h0M466.3 159.5h0M427.4 52.2h0M312.7 457.0h0M389.9 292.4h0M577.8 157.0h0M430.1 272.5h0M513.9 334.9h0M383.1 301.8h0M665.1 254.3h0M687.5 220.8h0M709.6 298.8h0M622.2 312.2h0M563.9 156.5h0M271.3 373.4h0M607.0 480.7h0M318.2 444.4h0M329.6 137.9h0M559.2 50.4h0M355.1 434.6h0M270.0 224.5h0M683.9 440.4h0M270.7 473.0h0M565.7 386.3h0M315.5 154.8h0M448.7 109.1h0M428.0 401.5h0M648.0 412.9h0M514.8 241.9h0M681.3 190.6h0M297.4 478.2h0M574.4 96.2h0M479.4 255.4h0M338.1 428.8h0M609.5 374.2h0M514.8 176.5h0M465.3 398.0h0M435.4 77.1h0M358.3 49.0h0M442.8 443.5h0M711.9 76.8h0M426.4 152.3h0M423.0 47.2h0M383.7 393.1h0M498.9 165.7h0M681.1 149.3h0M680.5 240.9h0M508.1 198.1h0M310.7 431.6h0M589.8 253.0h0M287.0 349.9h0M454.4 378.3h0M497.6 390.9h0M320.4 281.7h0M339.9 253.2h0M274.9 438.6h0M433.4 359.7h0M393.2 111.8h0M677.6 489.8h0M585.7 350.9h0M335.0 108.2h0M274.3 282.7h0M686.8 320.1h0M294.3 259.2h0M479.9 304.8h0M433.1 419.8h0M662.1 220.0h0M437.6 443.7h0M704.8 425.7h0M323.2 473.7h0M602.1 199.3h0M349.6 347.3h0M284.5 172.1h0M622.7 388.7h0M337.9 138.5h0M408.7 134.6h0M268.0 289.4h0M406.4 173.9h0M697.5 370.9h0M715.7 149.3h0M559.2 389.5h0M499.6 369.2h0M701.8 372.7h0M516.6 458.3h0M410.7 276.6h0M520.4 423.9h0M350.4 364.8h0M720.2 364.9h0M301.1 189.6h0M303.4 214.4h0M449.7 70.8h0M701.3 287.6h0M469.4 205.1h0M348.7 382.5h0M557.5 476.3h0M511.3 277.0h0M428.8 74.6h0M640.9 344.0h0M638.7 56.4h0M344.2 179.1h0M548.9 362.6h0M492.1 65.8h0M300.2 101.2h0M397.0 109.2h0M429.5 259.3h0M347.7 271.1h0M491.5 463.5h0M404.9 330.4h0M494.4 329.7h0M677.7 481.5h0M638.0 347.7h0M350.8 132.0h0M459.5 48.4h0M355.3 420.1h0M627.3 209.8h0M580.4 365.1h0M568.9 112.6h0M617.8 105.4h0M318.1 309.0h0M435.4 487.9h0M489.6 53.1h0M314.8 326.2h0M342.4 107.2h0M561.5 170.5h0M392.0 291.4h0M322.2 112.4h0M394.9 345.4h0M505.8 46.8h0M551.3 137.1h0M267.6 284.2h0M356.5 493.5h0M327.6 387.9h0M580.8 418.7h0M271.1 72.5h0M269.5 191.9h0M361.3 270.2h0M704.2 129.8h0M430.5 459.9h0M494.9 386.5h0M468.1 118.2h0M480.2 378.2h0M431.0 328.6h0M726.3 486.7h0M591.9 160.2h0M658.7 244.8h0M562.1 150.7h0M348.8 282.1h0M654.5 157.2h0M453.7 114.0h0M490.9 352.0h0M344.3 257.4h0M347.3 344.0h0M710.7 470.3h0M305.8 281.6h0M388.3 75.3h0M563.3 162.5h0M720.0 286.3h0M382.2 472.4h0M494.1 89.5h0M273.4 139.5h0M312.9 136.4h0M704.7 108.8h0M504.2 58.8h0M295.2 189.1h0M721.0 233.7h0M413.7 177.5h0M411.7 356.9h0M365.3 58.7h0M399.2 164.3h0M709.3 285.5h0M650.6 384.1h0M400.3 422.9h0M350.9 492.6h0M583.9 45.2h0M319.7 348.3h0M282.7 456.5h0M439.5 402.4h0M547.2 63.4h0M336.8 419.2h0M647.0 362.8h0M276.0 501.2h0M465.9 134.7h0M337.5 207.8h0M709.9 123.1h0M339.8 253.4h0M412.4 399.2h0M635.4 385.9h0M296.0 98.3h0M701.3 143.2h0M615.9 433.5h0M354.3 70.1h0M431.1 359.4h0M555.0 161.7h0M540.0 472.6h0M618.9 58.4h0M579.8 74.3h0M669.0 134.7h0M567.2 484.4h0M437.5 441.8h0M681.8 199.9h0M650.3 381.3h0M571.8 489.3h0M522.1 338.1h0M442.6 213.7h0M549.9 188.2h0M287.9 390.8h0M666.2 411.3h0M307.5 138.8h0M716.4 402.6h0M269.6 299.4h0M521.5 422.9h0M331.7 485.6h0M476.7 107.8h0M348.1 170.1h0M380.7 164.1h0M301.0 459.9h0M273.8 402.5h0M396.9 263.1h0M588.3 297.3h0M293.5 177.1h0M484.7 230.3h0M319.4 70.0h0M566.2 478.1h0M356.7 321.1h0M397.9 408.7h0M400.4 61.2h0M687.3 253.4h0M486.9 159.9h0M496.2 179.5h0M275.3 220.7h0M484.5 281.4h0M668.7 443.5h0M403.7 428.5h0M434.3 67.8h0M610.7 459.9h0M650.2 354.1h0M471.3 407.7h0M702.7 457.4h0M511.0 234.6h0M655.0 218.1h0M412.0 344.4h0M549.6 275.7h0M267.6 262.5h0M602.4 409.1h0M694.2 477.6h0M637.8 125.1h0M365.0 285.6h0M429.9 467.2h0M496.8 394.9h0M690.5 216.7h0M274.9 473.6h0M714.7 348.6h0M347.4 277.2h0M510.0 284.8h0M329.7 151.0h0M485.7 469.9h0M372.1 380.3h0M370.9 177.8h0M288.7 85.4h0M374.9 147.8h0M486.3 296.8h0M609.4 457.5h0M318.9 381.4h0M317.1 159.5h0M332.1 148.8h0M625.2 264.9h0M608.4 306.3h0M472.5 131.6h0M709.5 123.5h0M533.1 339.3h0M291.8 450.6h0M683.5 212.7h0M272.8 145.1h0M523.4 344.0h0M385.6 492.3h0M275.2 238.0h0M358.7 237.2h0M696.1 272.2h0M516.9 308.6h0M618.0 352.7h0M592.4 484.7h0M282.9 172.9h0M573.6 442.5h0M569.5 284.9h0M518.5 403.7h0M481.9 326.7h0M526.9 456.8h0M603.5 365.0h0M709.0 325.3h0M481.7 240.1h0M422.8 405.6h0M464.3 274.9h0M651.2 408.0h0M371.7 41.1h0M303.7 274.8h0M484.4 384.7h0M663.5 199.1h0M382.5 100.6h0M318.1 109.9h0M603.4 484.1h0M380.2 485.0h0M635.0 492.7h0M383.3 490.5h0M271.2 486.7h0M371.0 258.2h0M618.8 218.5h0M670.5 185.9h0M581.6 95.9h0M563.7 413.5h0M341.0 185.6h0M641.1 468.9h0M574.9 483.7h0M317.8 129.4h0M274.3 134.0h0M372.2 217.1h0M566.8 70.7h0M313.7 361.0h0M514.1 53.0h0M426.1 455.7h0M404.6 438.2h0M489.6 260.6h0M342.0 270.1h0M267.2 174.4h0M385.4 366.1h0M544.8 307.3h0M692.4 290.8h0M515.6 72.6h0M502.4 56.1h0M499.3 472.1h0M484.9 448.8h0M617.2 239.1h0M606.1 446.7h0M587.3 293.3h0M360.7 170.3h0M710.7 45.1h0M361.4 415.0h0M402.2 89.2h0M608.3 329.5h0M534.1 50.9h0M660.4 111.1h0M720.4 480.4h0M641.9 454.5h0M304.1 120.2h0M342.8 201.1h0M644.2 217.8h0M588.9 492.2h0M421.2 149.8h0M547.3 366.8h0M606.8 312.6h0M505.1 226.4h0M513.0 341.1h0M712.1 330.0h0M693.2 75.0h0M289.4 352.3h0M548.8 185.7h0M305.5 137.0h0M365.8 93.3h0M719.8 461.7h0M586.6 39.7h0M532.0 281.2h0M280.4 329.6h0M606.5 76.6h0M623.6 486.5h0M621.1 172.0h0M512.9 264.4h0M467.5 212.2h0M566.2 483.3h0M627.6 85.6h0M495.6 400.1h0M710.3 188.2h0M440.2 215.3h0M586.0 448.9h0M506.2 458.4h0M281.0 396.5h0M494.2 326.8h0M531.9 354.2h0M510.8 219.4h0M386.4 471.8h0M516.0 406.7h0M610.2 219.1h0M300.5 213.1h0M411.4 457.6h0M333.1 246.8h0M632.3 445.7h0M355.1 495.7h0M477.2 198.3h0M363.2 496.4h0M427.9 497.8h0M281.2 319.1h0M394.6 369.2h0M421.2 42.5h0M400.1 92.3h0M381.8 209.0h0M633.7 121.7h0M439.2 457.5h0M479.5 304.5h0M681.2 379.4h0M646.1 108.0h0M396.9 300.4h0M511.4 154.9h0M320.0 403.5h0M501.3 340.3h0M350.3 228.3h0M599.8 246.4h0M386.4 475.0h0M631.7 204.2h0M590.7 279.8h0M392.6 400.0h0M497.4 103.8h0M666.0 48.2h0M515.0 339.0h0M581.7 366.0h0M335.9 291.1h0M481.4 386.8h0M576.0 463.6h0M531.8 251.6h0M415.0 430.9h0M716.4 188.6h0M541.9 179.6h0M294.0 441.1h0M668.6 427.5h0M605.5 121.2h0M295.9 384.3h0M360.9 244.0h0M572.7 356.2h0M549.5 439.5h0M678.3 159.1h0M306.1 389.2h0M658.0 234.0h0M637.1 185.1h0M264.8 181.7h0M492.9 305.0h0M270.4 449.6h0M600.4 445.7h0M601.4 136.9h0M505.1 489.7h0M372.5 331.5h0M440.3 252.0h0M649.0 73.9h0M372.1 148.8h0M431.7 477.5h0M419.6 380.6h0M616.6 478.2h0M286.4 400.8h0M629.6 300.1h0M575.8 302.4h0M613.0 119.1h0M668.6 154.5h0M504.9 248.8h0M437.2 466.0h0M671.7 442.6h0M689.8 481.0h0M540.2 474.2h0M524.0 308.7h0M676.1 270.9h0M561.0 263.2h0M553.0 57.0h0M360.7 220.7h0M367.2 241.5h0M382.6 370.5h0M651.7 223.1h0M617.5 207.9h0M490.6 237.6h0M302.4 111.9h0M552.2 183.0h0M397.9 244.9h0M358.8 163.2h0M522.8 285.0h0M619.4 150.6h0M578.5 444.3h0M427.3 255.0h0M504.2 468.6h0M649.6 441.9h0M421.9 93.9h0M650.6 209.6h0M641.0 107.0h0M616.1 269.1h0M537.4 191.4h0M632.5 402.4h0M319.4 165.7h0M560.4 445.8h0M288.3 76.7h0M509.6 186.1h0M676.5 63.8h0M621.7 348.6h0M705.1 238.3h0M292.8 302.8h0M709.1 308.8h0M329.0 295.5h0M430.4 478.8h0M360.6 348.0h0M679.2 184.0h0M460.0 494.4h0M352.5 211.6h0M481.4 309.5h0M335.0 339.3h0M450.8 162.6h0M539.3 92.3h0M404.9 355.7h0M510.3 105.8h0M297.9 499.2h0M646.1 147.5h0M329.6 219.6h0M515.8 185.7h0M392.6 393.0h0M722.6 416.7h0M269.7 421.0h0M571.6 266.7h0M526.4 45.4h0M645.3 52.0h0M646.5 124.8h0M638.6 488.4h0M350.0 102.1h0M607.7 118.5h0M512.8 110.1h0M350.4 178.8h0M716.2 479.2h0M464.2 292.5h0M457.4 460.6h0M409.4 494.4h0M568.1 80.3h0M447.4 299.1h0M410.3 361.6h0M618.3 181.0h0M531.5 242.1h0M527.1 384.9h0M358.4 99.1h0M364.0 467.3h0M472.8 390.4h0M298.8 148.6h0M429.6 472.7h0M403.8 266.8h0M396.4 87.8h0M548.5 203.0h0M388.2 84.2h0M512.8 402.2h0M283.0 458.8h0M600.9 437.6h0M349.3 399.0h0M489.8 38.7h0M463.8 134.8h0M693.5 445.5h0M408.7 195.5h0M445.4 479.1h0M431.9 290.9h0M419.9 370.2h0M338.1 459.1h0M592.0 461.8h0M614.1 391.9h0M681.0 97.4h0M713.5 273.8h0M450.5 336.0h0M592.5 372.5h0M609.9 133.4h0M631.3 376.9h0M559.2 149.2h0M408.8 295.4h0M662.9 484.3h0M511.5 274.0h0M284.4 450.3h0M641.7 121.2h0M352.7 189.2h0M686.5 39.4h0M592.4 355.7h0M428.1 380.9h0M342.7 260.8h0M381.9 112.5h0M310.9 231.3h0M325.8 123.6h0M295.5 178.7h0M599.5 91.7h0M583.3 75.4h0M344.7 447.1h0M617.2 388.3h0M459.1 230.4h0M563.8 258.1h0M468.9 424.8h0M388.0 233.9h0M680.0 55.5h0M462.8 316.6h0M568.8 97.5h0M297.2 456.3h0M691.7 305.2h0M469.6 290.4h0M346.8 309.7h0M716.7 449.1h0M359.4 297.2h0M661.3 380.5h0M417.1 447.4h0M302.4 348.6h0M322.5 434.2h0M352.9 283.6h0M534.8 235.2h0M693.8 453.7h0M636.6 390.2h0M599.7 337.4h0M694.4 397.5h0M505.9 124.0h0M548.0 101.2h0M549.1 319.0h0M275.6 185.4h0M686.9 402.9h0M482.9 353.9h0M486.5 285.6h0M289.8 115.0h0M334.7 446.8h0M272.5 339.2h0M579.2 464.1h0M389.7 238.0h0M553.2 214.6h0M429.7 120.5h0M595.8 195.9h0M547.8 322.4h0M649.1 465.9h0M543.8 467.2h0M499.0 132.5h0M429.2 161.5h0M344.9 89.1h0M467.8 406.9h0M694.9 450.7h0M570.8 460.7h0M323.3 51.5h0M702.5 436.3h0M413.7 301.1h0M459.1 330.0h0M293.8 235.2h0M626.8 322.5h0M274.6 148.1h0M675.7 303.6h0M483.7 333.1h0M385.5 456.1h0M461.9 462.3h0M440.6 134.9h0M609.4 347.8h0M698.7 202.4h0M554.2 462.8h0M661.1 414.0h0M554.5 149.5h0M628.7 404.0h0M431.9 111.8h0M588.4 292.1h0M601.9 243.7h0M704.7 387.9h0M519.5 132.5h0M291.5 346.8h0M381.9 129.8h0M397.7 387.1h0M382.9 226.3h0M587.3 89.4h0M290.4 349.2h0M339.0 171.1h0M290.0 378.0h0M562.7 182.5h0M687.9 289.4h0M544.7 462.8h0M569.1 260.1h0M487.5 232.3h0M484.8 149.1h0M608.9 297.1h0M352.9 245.6h0M342.6 201.6h0M697.5 81.9h0M311.6 448.1h0M655.3 179.1h0M311.3 329.3h0M571.3 280.6h0M564.7 361.4h0M687.1 434.9h0M686.2 191.0h0M467.0 459.0h0M317.6 386.1h0M477.6 335.7h0M462.1 400.3h0M628.3 423.4h0M352.3 310.1h0M396.0 40.6h0M721.0 220.2h0M436.7 314.5h0M343.2 282.1h0M579.4 95.6h0M685.4 377.8h0M537.9 125.3h0M470.7 351.8h0M373.5 219.1h0M697.1 202.1h0M649.3 258.4h0M362.7 196.0h0M298.2 452.1h0M642.4 173.9h0M690.1 57.6h0M434.0 380.2h0M725.1 475.7h0M686.2 307.7h0M627.9 82.0h0M562.8 389.9h0M527.6 87.5h0M429.0 202.6h0M496.7 89.0h0M301.5 363.6h0M481.6 40.1h0M699.2 374.9h0M479.5 384.5h0M427.6 259.8h0M473.3 199.4h0M534.0 237.0h0M507.1 141.3h0M413.4 369.0h0M264.6 197.4h0M422.2 392.8h0M691.5 378.1h0M480.5 78.0h0M388.1 406.1h0M556.5 386.5h0M556.5 200.0h0M508.4 439.8h0M677.2 211.1h0M337.2 238.7h0M621.5 228.0h0M546.3 165.6h0M613.9 163.9h0M525.5 300.0h0M636.8 246.4h0M626.5 298.7h0M435.8 92.5h0M623.8 326.6h0M445.6 47.3h0M606.6 127.6h0M365.7 338.3h0M615.6 244.2h0M445.5 110.2h0M506.0 387.8h0M370.6 159.3h0M594.5 265.3h0M710.4 200.3h0M364.6 168.4h0M498.3 230.4h0M646.1 195.5h0M503.8 472.0h0M689.8 199.1h0M363.5 416.4h0M401.7 428.7h0M586.0 216.1h0M701.9 427.2h0M326.2 296.2h0M696.3 183.7h0M290.3 266.5h0M325.2 362.9h0M645.2 456.1h0M464.4 197.9h0M451.1 247.6h0M329.1 89.0h0M687.7 483.7h0M354.6 80.8h0M639.3 193.5h0M356.8 362.3h0M452.1 242.3h0M378.3 460.6h0M518.3 437.1h0M645.0 89.2h0M362.4 275.8h0M672.9 130.0h0M448.5 184.7h0M493.7 402.9h0M651.5 416.8h0M698.6 458.5h0M521.2 436.7h0M660.4 173.3h0M442.5 471.9h0M433.8 45.3h0M457.0 281.4h0M600.2 281.1h0M693.0 160.9h0M595.2 228.3h0M460.5 292.8h0M661.8 109.4h0M481.4 108.8h0M419.7 203.1h0M388.9 206.7h0M359.5 170.4h0M321.3 273.4h0M278.4 418.3h0M372.5 67.7h0M660.5 53.7h0M534.9 338.8h0M471.1 251.2h0M308.8 165.5h0M456.5 319.3h0M276.0 415.7h0M325.8 275.3h0M630.0 149.7h0M656.1 392.1h0M594.7 435.1h0M340.8 145.2h0M704.7 177.3h0M402.1 364.6h0M718.8 294.9h0M345.8 431.3h0M326.6 436.5h0M583.3 432.2h0M485.4 272.7h0M275.0 315.5h0M653.4 384.2h0M525.5 148.0h0M567.5 154.4h0M298.7 351.0h0M367.1 366.4h0M359.7 44.5h0M696.7 73.6h0M544.6 359.9h0M719.6 359.3h0M441.2 235.7h0M306.5 466.8h0M497.7 370.6h0M469.2 355.5h0M357.0 217.7h0M582.8 296.4h0M375.2 204.6h0M545.0 161.3h0M405.7 483.2h0M666.6 213.4h0M622.8 118.1h0M620.4 431.1h0M554.9 50.0h0M315.5 71.1h0M293.5 269.4h0M555.7 318.3h0M463.5 446.7h0M435.7 150.8h0M336.3 377.6h0M714.4 180.6h0M434.7 392.5h0M712.9 146.8h0M408.0 48.1h0M325.7 400.4h0M288.2 289.7h0M561.1 363.6h0M682.6 403.9h0M265.6 176.5h0M666.6 157.8h0M363.1 376.1h0M480.9 383.8h0M368.8 275.8h0M601.4 408.6h0M286.8 213.7h0M658.6 471.2h0M505.5 307.5h0M513.7 319.3h0M396.8 107.8h0M285.5 185.7h0M629.5 486.3h0M412.3 122.3h0M602.6 222.3h0M563.6 411.7h0M653.3 437.2h0M647.2 155.4h0M650.1 415.0h0M354.8 292.5h0M443.9 478.9h0M336.1 118.7h0M639.3 81.0h0M702.0 489.7h0M653.8 463.7h0M594.0 427.8h0M542.1 421.6h0M691.6 449.0h0M348.4 197.2h0M264.6 173.2h0M711.6 258.0h0M408.0 340.8h0M472.8 236.6h0M344.6 196.7h0M291.7 154.4h0M606.9 220.3h0M497.8 169.2h0M655.8 199.9h0M647.5 427.2h0M423.1 464.1h0M719.9 363.9h0M345.7 406.3h0M311.4 325.9h0M574.8 461.5h0M381.8 442.3h0M444.9 390.4h0M495.3 94.5h0M329.4 236.9h0M714.0 315.1h0M371.1 400.0h0M519.5 56.8h0M482.2 423.4h0M288.0 289.3h0M278.5 92.7h0M458.2 160.4h0M285.8 177.5h0M381.7 483.5h0M478.5 473.9h0M643.7 177.1h0M686.6 171.0h0M460.1 388.7h0M637.3 464.6h0M669.8 304.1h0M572.6 153.4h0M675.6 247.6h0M288.2 306.3h0M681.2 65.8h0M614.6 316.1h0M313.8 153.2h0M291.4 393.4h0M630.6 310.1h0M631.6 455.7h0M307.3 245.0h0M468.3 168.1h0M664.9 375.6h0M290.6 265.1h0M601.3 442.0h0M658.2 186.0h0M632.6 249.7h0M672.9 270.6h0M567.7 426.3h0M544.7 112.0h0M541.8 368.5h0M280.0 159.6h0M334.5 191.0h0M328.1 170.9h0M685.3 363.2h0M447.4 410.0h0M591.6 364.9h0M269.3 184.9h0M564.9 71.5h0M590.6 54.2h0M433.6 193.3h0M424.1 403.6h0M527.8 351.0h0M314.5 257.0h0M615.1 445.0h0M459.8 323.7h0M289.0 230.0h0M545.0 446.1h0M512.1 249.3h0M352.7 248.2h0M571.7 171.3h0M525.6 390.0h0M598.6 490.4h0M657.5 91.7h0M344.7 286.3h0M426.1 425.6h0M714.6 469.0h0M394.5 368.9h0M641.8 394.4h0M626.4 356.7h0M595.9 343.6h0M475.1 303.4h0M409.2 177.9h0M533.5 190.3h0M447.3 218.7h0M604.2 474.2h0M549.6 213.8h0M664.4 350.1h0M350.6 292.7h0M529.7 191.6h0M590.4 118.9h0M524.9 394.7h0M285.9 376.3h0M630.9 195.2h0M378.3 277.7h0M521.6 277.5h0M482.8 158.6h0M295.3 209.5h0M638.6 397.9h0M611.4 275.8h0M447.0 236.8h0M542.2 126.7h0M565.8 356.5h0M444.5 415.2h0M470.6 286.4h0M641.1 367.6h0M503.4 483.3h0M531.1 340.8h0M581.3 444.5h0M309.9 417.8h0M564.2 480.4h0M547.6 291.3h0M436.8 308.7h0M449.2 367.6h0M527.0 207.8h0M606.6 295.0h0M472.6 475.4h0M576.7 358.1h0M429.0 463.3h0M594.2 153.6h0M485.6 460.7h0M641.2 290.7h0M548.5 326.9h0M701.6 234.1h0M535.6 424.9h0M553.2 434.7h0M526.1 272.9h0M435.8 292.6h0M360.1 154.1h0M533.3 189.1h0M538.8 291.3h0M502.2 371.7h0M463.8 172.6h0M487.8 278.4h0M687.4 430.0h0M354.8 78.3h0M368.1 372.6h0M291.4 414.6h0M481.1 443.6h0M550.2 186.6h0M469.8 327.1h0M665.1 268.6h0M448.2 317.7h0M423.8 366.5h0M568.1 413.3h0M413.1 446.1h0M531.9 289.1h0M326.9 361.7h0M568.4 294.7h0M525.6 293.2h0M411.2 319.2h0M544.8 258.7h0M508.6 279.7h0M411.0 215.6h0M607.3 130.1h0M402.2 420.7h0M339.1 398.3h0M703.3 276.4h0M617.2 430.4h0M467.7 417.3h0M463.9 144.0h0M352.6 310.8h0M529.2 357.8h0M380.6 364.0h0M505.7 179.3h0M593.9 257.3h0M592.0 213.8h0M488.8 318.5h0M371.9 425.3h0M540.7 486.2h0M547.4 488.1h0M717.6 318.3h0M556.9 422.7h0M579.6 292.5h0M583.8 154.5h0M385.0 281.9h0M379.7 122.8h0M598.9 392.9h0M448.7 302.6h0M661.5 417.2h0M475.7 407.4h0M480.0 275.0h0M663.5 456.2h0M398.1 439.9h0M619.3 467.1h0M461.8 298.8h0M587.5 372.3h0M399.8 400.6h0M598.4 277.2h0M574.9 448.4h0M524.2 316.5h0M393.3 299.0h0M435.4 182.5h0M642.5 364.1h0M563.6 331.1h0M693.6 92.5h0M717.6 249.2h0M409.9 207.5h0M413.7 287.9h0M619.2 203.9h0M623.2 242.7h0M522.4 482.3h0M480.9 165.7h0M531.9 355.4h0M476.4 254.6h0M600.7 189.8h0M505.5 206.1h0M599.5 252.9h0M567.4 301.5h0M513.3 199.0h0M679.7 240.2h0M506.2 147.6h0M532.2 202.5h0M388.9 431.7h0M617.8 341.9h0M547.4 377.5h0M521.4 332.3h0M399.6 258.4h0M372.1 199.0h0M288.2 391.5h0M397.9 366.2h0M520.8 412.9h0M500.5 311.8h0M524.3 299.1h0M525.9 278.3h0M546.2 430.7h0M612.7 314.8h0M705.3 366.2h0M563.8 474.3h0M561.8 283.4h0M470.3 438.1h0M601.1 306.6h0M629.6 344.2h0M521.8 351.4h0M595.7 334.8h0M585.2 328.1h0M590.8 191.9h0M563.9 382.5h0M366.2 357.3h0M278.0 286.3h0M705.3 174.1h0M332.8 265.3h0M493.7 300.9h0M505.5 365.0h0M653.6 292.1h0M416.1 250.8h0M515.0 414.0h0M654.1 244.8h0M481.2 136.4h0M581.5 270.1h0M713.8 364.0h0M371.9 316.0h0M496.7 461.1h0M513.4 324.9h0M274.3 248.6h0M451.6 183.0h0M544.8 272.1h0M549.6 420.5h0M575.7 311.6h0M565.5 169.9h0M477.0 238.2h0M478.2 374.7h0M464.3 388.5h0M381.1 431.3h0M549.7 37.3h0M347.8 150.5h0M491.8 263.1h0M564.8 385.2h0M597.7 364.6h0M422.0 123.7h0M372.9 353.1h0M402.4 156.6h0M414.9 355.4h0M358.6 281.9h0M612.9 408.8h0M310.6 302.0h0M492.4 132.1h0M445.5 303.3h0M463.9 394.7h0M473.8 311.2h0M627.4 309.4h0M466.0 390.7h0M347.0 320.5h0M657.8 169.6h0M571.1 271.9h0M639.8 53.3h0M678.6 60.7h0M459.5 470.4h0M564.0 71.6h0M315.3 147.0h0M456.4 200.2h0M643.2 261.4h0M368.5 464.8h0M686.9 161.4h0M480.8 201.2h0M397.1 298.0h0M561.0 202.8h0M321.4 383.9h0M688.5 447.7h0M344.5 241.5h0M482.5 219.4h0M655.3 192.2h0M485.1 350.4h0M531.2 336.1h0M504.7 369.6h0M562.4 311.8h0M592.0 356.6h0M610.6 364.5h0M579.5 349.4h0M416.1 244.9h0M485.4 221.1h0M463.0 221.3h0M436.0 345.4h0M521.5 313.1h0M490.3 275.7h0M593.9 357.8h0M557.6 419.5h0M467.2 396.4h0M543.3 183.4h0M679.2 189.6h0M621.4 215.7h0M436.3 444.7h0M572.8 303.6h0M424.7 91.9h0M461.1 283.3h0M633.3 302.7h0M647.1 237.1h0M635.8 408.3h0M491.9 407.2h0M359.5 220.5h0M452.3 186.6h0" stroke="#a0a0a0" stroke-width="2.2"/><path d="M636.6 441.2h0M475.3 108.1h0M302.3 440.5h0M523.5 416.2h0M657.6 51.1h0M422.1 103.1h0M325.1 384.3h0M382.1 387.3h0M350.8 74.5h0M701.2 35.9h0M495.5 274.7h0M490.0 231.2h0M603.4 402.1h0M403.5 152.4h0M317.8 148.8h0M342.4 102.0h0M269.9 318.8h0M333.2 381.2h0M519.8 442.8h0M313.1 195.1h0M668.8 143.1h0M469.9 192.4h0M272.3 145.4h0M314.7 277.4h0M688.5 302.3h0M553.3 105.3h0M553.8 470.4h0M376.9 80.2h0M425.1 183.1h0M573.6 313.6h0M649.9 337.7h0M572.8 337.7h0M428.2 467.4h0M679.7 153.2h0M708.1 326.6h0M268.3 224.0h0M529.2 485.5h0M695.1 457.1h0M672.7 359.9h0M332.0 323.1h0M406.1 393.0h0M325.3 365.1h0M342.3 251.4h0M720.8 440.9h0M712.4 53.6h0M478.8 112.8h0M639.1 239.5h0M583.1 54.9h0M436.5 493.3h0M689.8 224.9h0M503.1 78.7h0M405.7 121.2h0M530.0 367.0h0M365.6 168.8h0M551.0 177.2h0M380.5 443.4h0M509.7 245.5h0M580.9 387.7h0M586.9 437.2h0M480.0 250.9h0M540.8 157.6h0M688.6 166.0h0M567.4 313.1h0M320.3 162.0h0M329.0 222.6h0M642.8 125.4h0M350.8 249.0h0M377.3 413.9h0M495.4 444.5h0M402.6 349.4h0M469.1 234.6h0M389.0 160.2h0M420.9 300.4h0M599.2 437.9h0M646.8 247.4h0M672.5 124.8h0M602.6 79.0h0M456.3 62.7h0M319.3 362.7h0M457.3 295.1h0M543.8 481.0h0M290.0 238.7h0M512.6 152.6h0M451.7 151.0h0M322.9 442.2h0M332.7 459.4h0M538.0 326.3h0M360.9 203.9h0M556.0 367.8h0M356.7 350.5h0M716.3 471.4h0M717.9 438.8h0M292.1 408.2h0M339.8 63.8h0M423.0 178.4h0M477.8 424.9h0M489.1 468.5h0M278.6 303.8h0M339.2 438.4h0M716.3 40.3h0M418.7 211.2h0M285.5 257.3h0M714.2 444.2h0M431.7 485.1h0M449.1 318.4h0M647.5 76.3h0M677.8 47.4h0M457.3 313.1h0M353.2 411.1h0M314.8 346.9h0M648.1 62.2h0M302.2 247.7h0M339.0 249.7h0M626.0 218.5h0M386.0 357.4h0M583.7 89.0h0M649.4 234.2h0M436.4 198.1h0M461.3 104.4h0M296.4 107.7h0M452.0 105.9h0M531.7 296.7h0M588.4 280.0h0M660.7 295.4h0M488.5 59.9h0M670.1 213.8h0M279.2 245.1h0M708.6 84.5h0M379.4 317.5h0M662.2 223.1h0M583.6 208.2h0M627.1 136.1h0M340.0 394.7h0M725.1 447.5h0M681.9 241.4h0M675.4 44.2h0M408.5 287.0h0M352.4 73.6h0M454.8 160.6h0M464.0 150.4h0M453.6 58.9h0M592.6 277.6h0M701.6 169.4h0M458.1 476.1h0M526.5 378.1h0M471.6 135.4h0M624.6 291.7h0M377.7 402.5h0M661.9 286.4h0M443.2 368.7h0M457.2 273.5h0M692.1 203.6h0M314.3 351.0h0M432.1 131.9h0M287.1 467.1h0M463.7 160.5h0M292.6 95.0h0M375.2 184.3h0M680.7 268.0h0M456.3 423.6h0M437.1 143.4h0M495.2 488.8h0M448.5 169.1h0M560.8 481.5h0M302.6 451.9h0M408.2 180.0h0M438.2 136.5h0M285.2 89.7h0M367.3 481.8h0M487.3 495.6h0M280.5 124.8h0M449.0 312.1h0M613.2 293.4h0M723.6 435.0h0M500.1 334.0h0M524.0 336.9h0M460.7 474.2h0M554.3 473.4h0M320.2 47.2h0M370.3 264.1h0M679.5 294.5h0M703.4 169.5h0M709.6 448.4h0M398.4 452.5h0M318.3 291.9h0M323.1 489.4h0M330.4 438.0h0M651.2 207.7h0M294.5 70.1h0M697.3 156.1h0M427.4 52.0h0M459.8 425.1h0M435.2 469.4h0M296.0 122.1h0M714.5 42.9h0M624.0 421.2h0M441.6 312.5h0M393.3 189.2h0M629.8 258.5h0M612.3 400.0h0M286.5 249.9h0M481.5 448.0h0M701.7 213.7h0M577.9 388.8h0M377.6 339.6h0M702.1 90.1h0M319.9 56.9h0M455.0 313.8h0M289.6 100.6h0M543.0 167.8h0M424.7 436.5h0M370.0 404.2h0M549.5 459.4h0M421.1 199.2h0M282.6 208.9h0M718.3 425.8h0M349.4 67.9h0M705.5 49.5h0M436.6 399.3h0M617.5 398.6h0M592.6 426.3h0M285.0 424.0h0M273.6 299.6h0M590.6 260.4h0M639.3 125.1h0M329.9 93.6h0M459.2 448.9h0M638.5 251.8h0M410.3 44.4h0M271.2 489.6h0M388.8 465.4h0M484.6 463.2h0M279.3 346.5h0M524.9 222.6h0M595.8 333.9h0M468.1 180.4h0M458.1 377.3h0M399.1 495.4h0M707.7 360.1h0M386.2 408.9h0M395.6 275.1h0M573.8 415.4h0M693.3 323.2h0M708.6 303.4h0M500.0 214.5h0M339.1 220.2h0M560.2 100.5h0M432.4 71.7h0M654.2 447.4h0M372.4 458.4h0M635.4 115.8h0M319.3 55.3h0M504.3 437.3h0M470.6 55.4h0M675.1 61.2h0M520.4 37.6h0M318.5 258.0h0M405.9 359.2h0M272.8 220.8h0M503.5 207.7h0M442.4 112.8h0M390.1 222.6h0M432.5 105.9h0M319.1 293.3h0M348.4 415.3h0M475.0 447.9h0M382.3 162.3h0M436.7 55.0h0M286.9 96.6h0M677.9 188.7h0M487.4 266.6h0M344.6 105.2h0M425.3 170.9h0M357.1 317.5h0M550.2 119.4h0M358.2 420.5h0M399.3 98.0h0M392.1 352.5h0M382.3 431.3h0M520.5 350.6h0M404.8 227.3h0M605.0 86.9h0M354.7 365.9h0M627.5 276.3h0M397.1 230.1h0M306.3 246.3h0M528.9 49.4h0M642.8 235.7h0M381.8 383.7h0M610.4 165.2h0M648.8 401.8h0M520.3 168.4h0M445.6 424.3h0M467.5 382.2h0M388.0 128.6h0M293.6 375.8h0M458.7 444.6h0M324.3 445.8h0M684.2 298.1h0M619.0 157.6h0M676.5 73.7h0M689.9 255.7h0M289.1 497.9h0M656.0 85.5h0M390.8 397.8h0M695.9 439.9h0M446.4 324.2h0M344.0 237.9h0M714.7 128.7h0M500.9 260.2h0M661.8 231.3h0M440.5 77.9h0M387.8 478.8h0M605.8 45.6h0M449.8 439.0h0M514.2 273.3h0M688.1 466.6h0M693.4 169.1h0M293.8 176.4h0M660.5 43.4h0M272.7 126.8h0M369.2 94.3h0M334.5 486.5h0M678.8 455.9h0M663.9 157.6h0M301.5 44.2h0M464.9 364.9h0M303.4 228.2h0M535.9 49.0h0M591.1 115.6h0M629.7 421.5h0M296.4 148.8h0M604.1 101.5h0M457.6 263.4h0M283.9 221.8h0M679.7 35.0h0M450.3 133.3h0M264.9 139.3h0M411.1 384.1h0M498.2 83.9h0M358.8 88.2h0M441.4 496.0h0M378.2 151.2h0M355.3 382.3h0M547.7 234.6h0M325.0 115.5h0M481.4 53.9h0M373.3 356.4h0M458.4 68.0h0M534.9 227.6h0M644.8 143.8h0M602.4 66.2h0M341.9 171.5h0M617.6 225.3h0M346.7 319.3h0M695.7 428.1h0M310.3 167.3h0M292.5 470.6h0M657.5 241.9h0M272.4 421.6h0M492.9 340.0h0M397.3 222.9h0M568.8 101.0h0M394.3 56.0h0M317.5 453.3h0M371.5 75.4h0M495.0 143.8h0M686.4 106.3h0M355.2 233.2h0M426.6 293.5h0M522.6 93.9h0M510.8 266.3h0M437.6 188.8h0M717.5 236.3h0M291.7 106.6h0M520.7 328.8h0M646.6 485.9h0M653.3 271.7h0M328.4 265.0h0M441.6 343.7h0M283.9 212.6h0M630.0 93.4h0M419.3 476.2h0M713.7 398.9h0M408.6 162.1h0M317.6 496.0h0M503.3 322.4h0M678.4 51.0h0M465.6 473.0h0M516.5 235.9h0M279.6 441.6h0M476.8 245.2h0M529.6 405.1h0M341.3 386.1h0M379.5 154.7h0M533.1 286.5h0M654.3 143.2h0M456.9 101.4h0M705.1 356.6h0M547.9 392.7h0M294.0 107.0h0M672.1 115.9h0M661.6 346.4h0M699.5 389.3h0M535.7 275.7h0M523.4 401.2h0M316.2 455.1h0M616.3 134.4h0M470.1 495.1h0M590.5 178.0h0M368.0 410.2h0M611.9 222.1h0M423.7 167.3h0M409.0 198.2h0M281.1 197.8h0M403.5 341.2h0M430.6 358.0h0M465.5 410.3h0M513.9 266.5h0M370.6 342.4h0M667.3 436.3h0M510.6 166.7h0M451.7 184.4h0M578.3 388.0h0M646.6 51.9h0M319.0 237.9h0M566.0 402.4h0M668.3 243.4h0M523.3 375.6h0M383.1 386.1h0M696.6 422.7h0M280.6 481.3h0M567.1 191.0h0M545.0 463.7h0M326.7 174.4h0M659.7 467.4h0M534.0 296.2h0M485.3 437.9h0M641.4 252.3h0M666.0 124.2h0M639.5 41.7h0M330.0 226.5h0M662.5 379.8h0M661.9 327.1h0M494.6 283.1h0M701.8 241.8h0M521.2 207.4h0M645.0 125.3h0M284.7 384.9h0M587.7 305.5h0M631.1 35.9h0M383.9 218.7h0M676.5 178.9h0M304.8 316.0h0M277.9 85.7h0M606.4 102.6h0M340.0 276.7h0M301.4 97.0h0M438.0 309.6h0M417.3 121.5h0M687.4 449.4h0M325.1 487.4h0M450.1 377.3h0M701.9 346.3h0M459.0 46.5h0M606.2 87.8h0M625.8 195.9h0M282.5 287.8h0M696.6 439.0h0M666.6 376.3h0M305.5 437.8h0M531.7 205.5h0M386.4 394.3h0M635.8 226.2h0M400.0 55.9h0M448.0 131.1h0M459.3 62.3h0M475.5 315.9h0M355.5 188.2h0M312.1 458.3h0M618.0 348.0h0M540.5 245.5h0M356.9 442.0h0M515.0 242.3h0M469.6 289.4h0M392.8 496.7h0M353.2 348.2h0M360.5 466.0h0M537.7 248.2h0M405.6 173.6h0M582.5 360.9h0M496.4 427.1h0M324.5 107.4h0M698.6 160.9h0M374.9 140.7h0M285.8 403.8h0M372.3 227.4h0M684.3 327.7h0M317.5 320.9h0M654.2 170.9h0M363.1 466.6h0M703.2 337.2h0M523.5 350.1h0M688.8 146.4h0M665.1 202.2h0M598.2 158.1h0M547.7 441.6h0M383.0 473.8h0M278.4 210.2h0M317.2 64.0h0M580.8 353.3h0M591.1 461.6h0M694.2 119.7h0M439.2 402.3h0M352.7 447.0h0M647.6 280.0h0M498.6 453.7h0M321.4 413.5h0M282.7 181.7h0M312.0 146.0h0M395.1 225.9h0M571.1 276.0h0M376.6 83.1h0M533.0 274.9h0M673.2 331.3h0M334.5 400.1h0M665.4 179.8h0M638.4 342.7h0M564.6 174.8h0M677.4 304.7h0M337.2 55.2h0M539.7 464.8h0M693.8 118.2h0M612.9 351.2h0M516.5 335.9h0M617.9 443.0h0M335.5 56.9h0M372.2 399.9h0M590.3 257.5h0M396.2 112.4h0M480.2 145.4h0M710.2 369.2h0M292.7 303.7h0M334.3 226.5h0M527.0 63.5h0M577.0 319.8h0M719.7 462.3h0M714.1 418.4h0M271.1 384.4h0M675.3 90.6h0M350.3 264.1h0M588.2 58.8h0M345.8 433.6h0M446.4 199.2h0M647.4 429.9h0M692.8 201.4h0M616.1 287.2h0M618.8 273.7h0M590.0 115.8h0M289.7 96.8h0M554.8 239.3h0M334.8 402.2h0M519.2 185.5h0M417.8 162.7h0M440.9 91.2h0M410.4 206.2h0M500.8 51.2h0M702.4 464.4h0M406.4 182.9h0M433.5 418.3h0M374.1 258.8h0M533.2 229.1h0M577.0 397.9h0M650.6 463.2h0M542.9 308.1h0M678.1 335.0h0M677.0 333.9h0M595.1 134.8h0M401.5 481.2h0M615.9 454.4h0M674.6 424.3h0M632.2 401.9h0M486.0 478.1h0M617.4 389.9h0M346.4 454.4h0M399.0 386.8h0M581.3 247.3h0M644.1 83.8h0M510.4 63.1h0M640.7 237.2h0M488.3 86.5h0M378.2 42.8h0M636.5 382.2h0M652.2 492.0h0M528.1 337.9h0M573.1 222.6h0M420.2 485.8h0M562.3 367.6h0M343.6 470.6h0M445.6 457.9h0M584.1 275.8h0M331.7 401.8h0M598.8 481.8h0M626.2 57.0h0M554.4 407.9h0M358.2 425.4h0M478.0 477.2h0M370.8 174.2h0M671.4 174.2h0M282.2 387.8h0M493.4 133.3h0M679.9 490.8h0M584.3 207.7h0M384.4 92.8h0M372.1 42.7h0M385.4 89.8h0M382.0 224.5h0M683.4 111.4h0M431.3 283.8h0M287.7 372.5h0M692.8 244.4h0M456.3 271.6h0M504.2 174.5h0M602.6 255.6h0M617.7 222.2h0M615.2 191.5h0M663.6 226.2h0M390.2 337.2h0M572.9 352.3h0M451.8 394.2h0M707.2 428.9h0M539.0 207.4h0M587.3 481.1h0M437.7 275.3h0M307.6 361.0h0M558.8 374.7h0M699.8 442.5h0M394.7 348.9h0M651.3 463.9h0M276.6 364.9h0M648.4 420.4h0M466.2 295.0h0M647.0 250.4h0M704.8 421.0h0M650.4 81.0h0M614.5 332.3h0M310.1 305.0h0M512.0 184.7h0M568.4 291.1h0M501.1 297.5h0M420.0 220.1h0M477.9 344.9h0M341.9 224.0h0M620.5 40.3h0M580.5 46.3h0M387.5 437.5h0M507.5 325.8h0M586.2 138.9h0M459.6 430.8h0M454.7 436.8h0M448.8 54.0h0M302.9 315.5h0M270.5 499.8h0M313.5 264.5h0M642.2 455.2h0M321.4 62.6h0M551.9 408.3h0M367.4 240.1h0M382.7 326.6h0M307.8 196.4h0M273.8 258.8h0M304.1 94.4h0M426.1 237.5h0M365.7 185.4h0M712.5 410.3h0M326.9 362.8h0M675.3 360.7h0M289.3 179.7h0M561.2 391.2h0M282.5 232.3h0M621.0 377.8h0M332.5 439.9h0M529.9 50.9h0M425.7 360.4h0M592.6 169.0h0M447.5 490.6h0M263.6 69.9h0M707.6 478.9h0M430.9 447.6h0M377.2 441.2h0M704.8 387.3h0M298.2 454.0h0M427.3 376.6h0M415.4 221.3h0M702.4 97.6h0M477.2 437.0h0M627.4 239.4h0M385.2 483.7h0M634.4 57.8h0M381.6 481.1h0M505.9 486.7h0M612.4 298.5h0M390.2 221.4h0M284.9 348.2h0M334.5 254.1h0M606.7 133.8h0M470.5 484.5h0M646.7 392.5h0M540.8 220.3h0M420.9 78.9h0M623.1 70.5h0M667.4 308.7h0M361.5 392.7h0M618.9 226.8h0M588.3 274.0h0M467.1 117.5h0M550.8 210.9h0M266.1 67.7h0M475.9 126.3h0M273.4 80.7h0M406.0 173.3h0M600.8 456.4h0M316.5 265.6h0M414.7 330.1h0M324.6 500.1h0M701.9 40.5h0M338.1 382.2h0M322.1 458.5h0M597.2 436.0h0M713.4 345.0h0M372.1 448.3h0M726.8 477.2h0M456.0 41.7h0M289.9 257.8h0M538.4 136.2h0M428.6 101.2h0M370.5 421.8h0M697.5 80.3h0M597.9 273.9h0M693.4 54.6h0M281.1 469.1h0M651.5 233.6h0M494.8 272.4h0M431.8 413.2h0M392.9 160.8h0M465.5 323.8h0M704.3 310.9h0M721.9 306.1h0M378.8 184.9h0M357.4 280.1h0M695.7 402.5h0M624.9 327.2h0M273.7 452.9h0M667.9 90.6h0M315.9 213.1h0M672.6 482.4h0M329.2 157.0h0M272.2 224.8h0M497.5 322.6h0M436.7 59.7h0M340.5 142.2h0M560.0 255.8h0M540.7 130.4h0M585.3 303.9h0M589.1 98.8h0M268.7 210.0h0M496.1 394.2h0M531.7 295.6h0M550.6 144.7h0M625.7 50.1h0M391.5 270.8h0M553.5 424.9h0M596.2 476.5h0M333.8 215.3h0M656.0 357.3h0M538.9 371.6h0M670.6 118.1h0M633.2 186.9h0M441.5 151.0h0M565.5 395.6h0M555.3 194.6h0M495.3 415.0h0M574.6 197.1h0M686.3 346.6h0M429.1 118.3h0M486.9 269.4h0M633.6 396.8h0M443.3 266.1h0M531.9 121.9h0M555.1 306.4h0M529.8 200.0h0M571.9 359.6h0M409.1 438.0h0M575.0 345.5h0M397.6 337.1h0M459.6 479.6h0M544.7 392.4h0M385.8 438.5h0M473.7 354.5h0M684.2 294.1h0M452.7 398.5h0M689.5 305.9h0M465.3 209.4h0M508.7 200.1h0M338.7 329.2h0M582.8 426.5h0M327.6 218.0h0M629.5 294.0h0M506.4 250.2h0M390.7 338.8h0M430.2 423.8h0M500.0 374.1h0M426.4 218.8h0M700.4 79.3h0M585.4 235.2h0M457.4 376.0h0M477.9 383.3h0M525.5 349.5h0M719.9 294.7h0M368.0 353.1h0M402.1 110.8h0M698.1 431.4h0M496.9 324.5h0M338.4 383.4h0M414.7 463.2h0M691.2 411.5h0M506.0 285.0h0M541.6 353.7h0M621.5 172.7h0M504.4 250.2h0M599.4 313.1h0M408.8 208.6h0M349.7 258.9h0M560.0 188.9h0M461.6 276.0h0M613.5 342.0h0M647.1 392.5h0M646.9 410.4h0M480.5 345.1h0M603.3 307.6h0M470.6 270.3h0M446.1 392.8h0M665.0 207.7h0M578.4 297.9h0M373.9 131.3h0M528.0 378.0h0M489.7 237.9h0M425.5 252.2h0M568.3 372.3h0M575.8 255.4h0M626.3 374.9h0M551.1 453.9h0M471.7 209.1h0M511.6 437.3h0M482.3 458.3h0M285.6 394.2h0M551.6 134.4h0M699.3 182.1h0M556.0 283.2h0M690.9 234.6h0M649.3 196.5h0M701.4 244.5h0M317.5 180.9h0M339.5 246.6h0M523.4 384.8h0M614.7 381.3h0M556.3 122.9h0M555.9 207.3h0M715.0 487.1h0M570.4 204.3h0M652.7 34.8h0M332.5 201.4h0M694.3 349.6h0M528.0 102.8h0M529.0 475.0h0M549.4 398.0h0M526.6 71.7h0M397.3 239.2h0M396.5 428.5h0M465.2 268.8h0M424.9 172.5h0M619.2 167.4h0M709.8 235.2h0M514.6 250.3h0M552.6 77.9h0M472.7 405.5h0M661.5 350.5h0M458.5 265.0h0M337.6 447.7h0M463.8 253.2h0M571.1 486.2h0M432.7 288.0h0M537.1 366.7h0M668.2 139.5h0M594.2 117.0h0M567.1 324.9h0M479.9 132.4h0M623.9 114.8h0M366.1 381.8h0M558.1 292.6h0M410.8 198.4h0M339.3 304.9h0M464.8 342.0h0M274.0 332.8h0M609.8 170.7h0M599.3 219.7h0M421.0 408.1h0M454.2 320.8h0M660.6 403.9h0M558.6 451.9h0M451.7 412.0h0M583.4 318.8h0M592.8 309.5h0M424.2 221.8h0M593.6 267.2h0M402.3 308.6h0M584.0 188.7h0M459.7 399.5h0M625.7 229.2h0M619.0 352.9h0M506.1 219.9h0M468.2 281.4h0M352.2 375.0h0M667.9 379.1h0M535.0 437.5h0M513.6 286.0h0M374.2 357.5h0M674.2 287.9h0M711.2 127.7h0M625.3 193.8h0M582.9 384.7h0M562.1 329.6h0M338.2 377.1h0M463.3 97.6h0M543.0 368.5h0M666.6 333.0h0M526.4 192.9h0M511.9 451.6h0M689.2 102.6h0M503.7 107.9h0M507.7 279.0h0M515.7 284.6h0M612.5 314.8h0M495.2 220.2h0M548.1 299.8h0M292.1 264.5h0M657.0 420.5h0M496.9 460.0h0M407.2 237.0h0M557.4 358.9h0M433.5 388.2h0M467.9 380.7h0M417.7 330.3h0M464.9 195.0h0M591.5 313.3h0M649.2 310.0h0M417.9 326.8h0M333.3 230.3h0M361.0 343.5h0M530.2 299.0h0M518.5 362.5h0M302.0 226.9h0M350.5 176.1h0M279.8 475.9h0M427.6 81.3h0M574.5 372.3h0M497.9 219.7h0M489.5 149.3h0M661.5 281.4h0M408.8 286.6h0M583.8 250.4h0M629.4 278.3h0M586.1 412.1h0M538.9 441.2h0M440.1 197.2h0M411.7 257.0h0M498.6 433.5h0M338.8 295.0h0M640.0 303.6h0M449.1 278.6h0M555.1 90.3h0M429.5 309.4h0M611.2 395.1h0M268.8 426.3h0M603.5 171.8h0M689.3 416.2h0M398.8 163.5h0M478.4 318.0h0M617.9 394.6h0M523.3 309.1h0M594.4 190.5h0M499.4 181.2h0M468.2 394.2h0M485.0 341.6h0M613.0 366.4h0M400.9 494.5h0M526.4 325.5h0M433.7 258.9h0M551.9 468.8h0M532.1 380.4h0M558.3 81.8h0M589.3 233.5h0M415.3 392.7h0M500.6 404.2h0M459.6 304.1h0M397.8 291.3h0M642.7 293.7h0M684.5 325.2h0M334.3 120.8h0M467.9 236.2h0M480.5 395.8h0M492.4 148.8h0M324.1 409.7h0M524.2 176.8h0M562.8 373.3h0M443.8 384.2h0M529.8 338.5h0M397.2 246.0h0M636.9 259.9h0M409.6 466.6h0M491.8 388.4h0M452.9 252.3h0M315.8 282.4h0M520.8 312.3h0M471.2 334.1h0M502.4 263.3h0M691.1 415.4h0M694.9 248.7h0M620.7 348.4h0M455.5 483.1h0M482.3 285.4h0M469.9 359.3h0M533.6 260.6h0M490.3 214.4h0M571.7 262.4h0M698.7 359.8h0M558.0 359.7h0M631.7 83.7h0M603.5 85.3h0M516.8 182.4h0M591.5 246.5h0M696.5 111.7h0M627.4 246.2h0M669.3 249.6h0M470.2 364.1h0M322.4 175.1h0M484.2 251.1h0M499.3 244.6h0M568.9 100.6h0M591.4 316.9h0M676.4 204.3h0M602.1 246.5h0M620.4 476.7h0M497.3 184.4h0M424.2 374.6h0M379.4 46.7h0M691.2 347.1h0M615.2 293.8h0M587.0 348.3h0M554.6 78.6h0M606.1 307.3h0M479.3 212.3h0M410.0 108.0h0M605.6 302.2h0M571.0 225.7h0M439.9 265.1h0M619.1 385.3h0M690.3 335.9h0M559.7 192.4h0M503.3 267.8h0M283.4 355.3h0M419.2 247.9h0M492.8 486.5h0M603.9 208.2h0M637.3 275.4h0M609.3 306.2h0M460.4 146.9h0M510.0 203.1h0M669.4 210.6h0M647.9 140.5h0M538.5 329.3h0M425.9 298.7h0M458.2 146.0h0M590.5 146.2h0M532.4 330.3h0M564.5 233.7h0M408.7 337.6h0M382.0 139.0h0M688.5 243.7h0M508.5 250.4h0M511.7 353.4h0M478.7 132.7h0M661.6 260.0h0M393.3 412.9h0M714.3 211.0h0M434.8 292.6h0M656.8 308.9h0M475.4 333.7h0M591.3 111.0h0M418.3 465.2h0M471.1 115.4h0M284.0 143.5h0M537.2 177.5h0M625.0 382.1h0M560.7 313.6h0M576.8 338.1h0M573.2 171.8h0M472.9 384.2h0M603.7 98.7h0M337.4 294.8h0M435.6 393.3h0M667.6 384.6h0M570.8 488.5h0M531.8 46.1h0M454.5 281.2h0M532.5 477.2h0M595.8 347.7h0M380.2 76.2h0M571.9 230.4h0M420.3 261.2h0M312.3 394.7h0M621.3 278.1h0M691.3 369.4h0M393.2 287.7h0M609.7 320.9h0M673.7 305.7h0M580.2 301.3h0M538.5 370.3h0M544.1 284.7h0M427.1 292.1h0M484.5 297.8h0M585.3 200.4h0M353.9 368.1h0M535.0 83.7h0M448.6 308.1h0M578.5 95.2h0M689.6 370.4h0M439.5 210.5h0M422.0 249.0h0M644.7 361.5h0M377.7 294.6h0M536.2 206.9h0M572.5 439.0h0M488.0 319.1h0M692.9 303.7h0M419.1 285.3h0M610.5 341.1h0M528.9 432.1h0M588.1 145.2h0M703.2 228.5h0M462.3 247.7h0M476.0 199.3h0M518.5 238.5h0M668.6 348.9h0" stroke="#f4f4f4" stroke-width="2.5"/><path d="M339.1 123.4h0M454.8 488.4h0M349.5 394.3h0M702.7 110.1h0M663.0 320.2h0M290.8 488.0h0M504.2 285.5h0M405.9 48.1h0M643.7 140.1h0M264.9 223.3h0M415.0 436.5h0M564.1 54.4h0M621.0 430.7h0M500.7 492.2h0M507.0 236.2h0M698.0 230.7h0M472.6 246.8h0M389.2 45.9h0M549.9 221.8h0M374.5 340.5h0M418.7 257.8h0M451.5 46.4h0M407.1 78.4h0M632.6 50.7h0M383.5 306.7h0M563.2 368.8h0M681.0 275.1h0M411.6 295.9h0M336.0 263.6h0M668.3 408.8h0M331.1 64.0h0M349.7 380.1h0M402.7 444.6h0M404.8 471.7h0M605.6 138.6h0M309.0 368.0h0M446.3 46.0h0M446.8 203.0h0M444.6 239.7h0M281.6 178.3h0M675.1 337.1h0M600.9 233.3h0M562.1 136.8h0M594.6 221.8h0M659.5 354.5h0M722.7 285.8h0M595.6 430.2h0M422.5 345.4h0M553.7 157.6h0M456.1 440.2h0M325.7 489.0h0M499.4 424.5h0M689.4 343.0h0M656.3 334.7h0M390.9 306.3h0M605.2 368.6h0M447.4 380.2h0M424.1 211.8h0M689.4 85.8h0M425.0 129.3h0M302.8 50.3h0M707.5 58.5h0M576.5 114.9h0M378.3 42.2h0M507.1 153.3h0M490.5 480.4h0M641.9 427.8h0M697.3 278.0h0M494.1 279.2h0M600.2 74.7h0M571.2 215.7h0M593.9 254.4h0M486.4 77.0h0M437.2 54.3h0M558.3 272.7h0M352.0 61.9h0M269.8 195.6h0M499.4 58.7h0M652.4 60.1h0M322.3 269.3h0M555.1 173.3h0M464.2 463.6h0M663.6 315.0h0M667.0 48.3h0M293.1 376.4h0M331.8 84.2h0M484.6 269.9h0M617.5 171.3h0M694.0 198.7h0M501.5 389.3h0M391.8 348.5h0M276.1 155.4h0M383.3 280.6h0M566.0 216.2h0M284.3 56.8h0M367.7 487.0h0M604.2 358.3h0M297.9 409.3h0M561.4 457.2h0M303.3 462.0h0M358.5 415.5h0M346.9 296.4h0M352.4 472.3h0M310.3 363.3h0M479.6 156.4h0M595.3 278.8h0M353.2 251.4h0M309.7 279.9h0M710.3 403.6h0M636.9 149.2h0M350.5 374.0h0M655.7 299.8h0M567.8 327.1h0M578.0 385.2h0M670.4 160.8h0M668.4 50.5h0M649.7 258.4h0M504.9 282.4h0M535.8 405.4h0M341.2 92.6h0M482.3 283.2h0M416.3 497.9h0M298.7 426.5h0M484.6 484.6h0M373.2 236.4h0M412.5 316.3h0M379.4 301.3h0M454.5 177.6h0M480.2 285.8h0M542.1 436.4h0M296.2 349.0h0M469.9 104.5h0M433.2 319.2h0M314.1 355.1h0M396.1 443.3h0M280.8 394.4h0M369.6 440.6h0M353.6 171.9h0M381.5 40.8h0M700.4 322.8h0M360.7 370.1h0M359.3 223.9h0M570.8 62.0h0M527.9 56.6h0M717.3 311.2h0M515.8 173.7h0M492.2 196.1h0M379.7 62.2h0M364.8 144.4h0M304.5 279.6h0M285.0 452.1h0M589.2 365.0h0M456.7 361.5h0M360.5 322.3h0M397.4 121.4h0M541.0 370.7h0M326.8 184.9h0M323.7 247.1h0M595.5 354.9h0M266.1 219.1h0M565.3 277.4h0M537.7 95.7h0M364.4 333.3h0M661.3 450.0h0M516.6 419.6h0M410.0 352.5h0M361.6 224.2h0M511.2 250.3h0M360.1 477.1h0M391.5 58.6h0M271.3 272.0h0M681.9 487.1h0M392.7 414.0h0M555.5 90.6h0M568.5 44.3h0M574.1 48.6h0M599.3 151.0h0M555.9 481.5h0M611.0 53.7h0M420.9 450.4h0M392.5 205.7h0M380.7 201.7h0M487.7 200.0h0M456.7 424.2h0M449.7 397.2h0M596.7 183.1h0M687.2 307.3h0M454.7 481.0h0M640.1 311.8h0M570.7 325.7h0M472.2 295.8h0M644.0 318.2h0M361.0 284.5h0M342.2 142.7h0M651.1 248.4h0M598.2 333.5h0M446.4 356.2h0M695.6 294.3h0M425.0 393.8h0M493.8 334.9h0M450.3 231.8h0M540.1 378.9h0M492.5 163.6h0M520.5 270.6h0M393.0 300.8h0M422.0 221.3h0M626.0 256.5h0M524.0 433.0h0M458.6 420.5h0M415.0 361.5h0M551.1 300.9h0M492.3 313.4h0M619.8 118.3h0M639.4 460.9h0M594.5 296.5h0M360.6 173.3h0M412.4 441.0h0M402.9 271.2h0M353.2 364.6h0M413.0 88.4h0M608.5 187.5h0M625.0 338.0h0M467.2 425.3h0M593.9 372.5h0M532.8 221.8h0M338.1 143.3h0M455.0 393.8h0M713.3 358.7h0M512.4 89.9h0M717.7 473.9h0M697.7 451.2h0M371.0 326.7h0M275.6 358.5h0M409.1 446.9h0M384.2 292.2h0M711.9 263.9h0M532.8 261.5h0M556.3 325.4h0M557.2 276.6h0M497.1 314.6h0M537.0 265.6h0M496.4 492.3h0M501.2 256.9h0M315.9 105.3h0M588.4 183.4h0M671.6 277.2h0M682.7 250.4h0M386.7 216.5h0M638.5 213.9h0M469.3 174.1h0M486.5 415.9h0M557.1 300.5h0M511.7 224.9h0M479.3 164.4h0M311.7 430.6h0M579.2 300.4h0M536.7 415.1h0M551.3 342.5h0M420.4 333.6h0M616.2 230.0h0M594.4 376.1h0M348.0 282.8h0M316.1 393.9h0M512.3 203.6h0M664.2 226.6h0M522.1 229.1h0M435.7 369.1h0M420.8 229.4h0M503.7 402.4h0M542.1 246.5h0M598.0 126.4h0M524.5 125.7h0M576.4 469.9h0M426.2 373.2h0M543.9 361.2h0M502.6 60.1h0M605.5 286.3h0M579.8 290.8h0M263.0 49.8h0M397.2 442.3h0M623.9 430.1h0M594.9 384.3h0M532.2 231.7h0M491.2 301.6h0M597.6 40.8h0M446.7 291.3h0M475.0 422.8h0M380.7 139.1h0M542.2 318.9h0M465.2 226.8h0M412.0 460.3h0M489.5 242.5h0M447.9 198.4h0M562.1 381.3h0M550.3 314.5h0M454.9 316.3h0M408.5 293.8h0M632.4 412.2h0M493.6 432.3h0M667.9 430.4h0M518.6 246.6h0M386.3 166.8h0M418.1 264.5h0M642.6 186.8h0M275.3 371.0h0M692.5 285.9h0M405.4 146.1h0M698.0 179.3h0M396.6 246.7h0M429.4 210.8h0M427.0 358.1h0M587.1 182.7h0M406.3 289.1h0M582.0 164.1h0M629.9 97.0h0M695.1 393.0h0M622.2 382.4h0M540.1 336.3h0M700.1 128.7h0M521.7 445.8h0M481.1 403.1h0M563.3 219.2h0M523.4 204.1h0M410.0 268.8h0M651.4 252.6h0M363.4 259.8h0M297.8 274.1h0M503.7 175.9h0M531.7 338.8h0M695.9 42.9h0M555.3 272.2h0M602.6 208.8h0M558.8 227.3h0M391.6 396.8h0" stroke="#ffffff" stroke-width="3.3"/><path d="M337.3 43.0h0M469.0 40.6h0M496.0 40.6h0M564.4 42.0h0M394.5 192.0h0M264.0 226.0h0M361.7 96.8h0M320.2 115.3h0M571.7 349.0h0" stroke="#fff" stroke-width="4.0"/><path d="M548.8 80.7h0M402.3 101.7h0M517.0 115.3h0M627.9 116.3h0M637.6 113.4h0M606.9 132.9h0M460.4 142.2h0M629.3 34.3h0M566.8 167.6h0M649.8 177.3h0M420.3 195.4h0M432.5 203.2h0M298.3 178.3h0M720.6 224.7h0M674.3 243.3h0M543.4 214.0h0M588.8 213.0h0M415.5 218.8h0M517.0 244.7h0M532.6 255.5h0M569.3 243.3h0M405.7 243.3h0M381.3 282.1h0M453.5 273.3h0M446.2 306.5h0M486.3 305.0h0M547.3 306.5h0M493.6 334.3h0M344.7 334.3h0M338.8 309.9h0M330.0 280.6h0M620.5 322.1h0M641.5 322.1h0M710.9 319.7h0M481.4 357.3h0M524.3 356.3h0M569.3 339.2h0M607.4 352.4h0M378.8 389.0h0M564.4 388.0h0M518.0 398.8h0M431.6 402.7h0M402.3 423.7h0M514.6 422.2h0M618.1 411.0h0M661.0 415.9h0M692.3 435.4h0M277.3 285.5h0M270.4 391.5h0M310.5 412.5h0M359.3 414.9h0M530.2 459.8h0M569.3 453.0h0M460.4 486.7h0M671.8 488.1h0M310.5 498.9h0M588.8 439.3h0M706.0 346.5h0M637.6 372.0h0" stroke="#fff" stroke-width="4.8"/><path d="M627.9 62.6h0M594.7 267.0h0M652.3 303.6h0M435.0 335.3h0M482.8 440.3h0" stroke="#fff" stroke-width="7.4"/><circle cx="483.7" cy="187.9" r="9.6" fill="#f4f4f4"/><circle cx="477.5" cy="194.5" r="2" fill="#fff"/></g><g fill="none" stroke-linecap="round" filter="url(#b2)"><path d="M636.6 441.2h0M475.3 108.1h0M302.3 440.5h0M523.5 416.2h0M657.6 51.1h0M422.1 103.1h0M325.1 384.3h0M382.1 387.3h0M350.8 74.5h0M701.2 35.9h0M495.5 274.7h0M490.0 231.2h0M603.4 402.1h0M403.5 152.4h0M317.8 148.8h0M342.4 102.0h0M269.9 318.8h0M333.2 381.2h0M519.8 442.8h0M313.1 195.1h0M668.8 143.1h0M469.9 192.4h0M272.3 145.4h0M314.7 277.4h0M688.5 302.3h0M553.3 105.3h0M553.8 470.4h0M376.9 80.2h0M425.1 183.1h0M573.6 313.6h0M649.9 337.7h0M572.8 337.7h0M428.2 467.4h0M679.7 153.2h0M708.1 326.6h0M268.3 224.0h0M529.2 485.5h0M695.1 457.1h0M672.7 359.9h0M332.0 323.1h0M406.1 393.0h0M325.3 365.1h0M342.3 251.4h0M720.8 440.9h0M712.4 53.6h0M478.8 112.8h0M639.1 239.5h0M583.1 54.9h0M436.5 493.3h0M689.8 224.9h0M503.1 78.7h0M405.7 121.2h0M530.0 367.0h0M365.6 168.8h0M551.0 177.2h0M380.5 443.4h0M509.7 245.5h0M580.9 387.7h0M586.9 437.2h0M480.0 250.9h0M540.8 157.6h0M688.6 166.0h0M567.4 313.1h0M320.3 162.0h0M329.0 222.6h0M642.8 125.4h0M350.8 249.0h0M377.3 413.9h0M495.4 444.5h0M402.6 349.4h0M469.1 234.6h0M389.0 160.2h0M420.9 300.4h0M599.2 437.9h0M646.8 247.4h0M672.5 124.8h0M602.6 79.0h0M456.3 62.7h0M319.3 362.7h0M457.3 295.1h0M543.8 481.0h0M290.0 238.7h0M512.6 152.6h0M451.7 151.0h0M322.9 442.2h0M332.7 459.4h0M538.0 326.3h0M360.9 203.9h0M556.0 367.8h0M356.7 350.5h0M716.3 471.4h0M717.9 438.8h0M292.1 408.2h0M339.8 63.8h0M423.0 178.4h0M477.8 424.9h0M489.1 468.5h0M278.6 303.8h0M339.2 438.4h0M716.3 40.3h0M418.7 211.2h0M285.5 257.3h0M714.2 444.2h0M431.7 485.1h0M449.1 318.4h0M647.5 76.3h0M677.8 47.4h0M457.3 313.1h0M353.2 411.1h0M314.8 346.9h0M648.1 62.2h0M302.2 247.7h0M339.0 249.7h0M626.0 218.5h0M386.0 357.4h0M583.7 89.0h0M649.4 234.2h0M436.4 198.1h0M461.3 104.4h0M296.4 107.7h0M452.0 105.9h0M531.7 296.7h0M588.4 280.0h0M660.7 295.4h0M488.5 59.9h0M670.1 213.8h0M279.2 245.1h0M708.6 84.5h0M379.4 317.5h0M662.2 223.1h0M583.6 208.2h0M627.1 136.1h0M340.0 394.7h0M725.1 447.5h0M681.9 241.4h0M675.4 44.2h0M408.5 287.0h0M352.4 73.6h0M454.8 160.6h0M464.0 150.4h0M453.6 58.9h0M592.6 277.6h0M701.6 169.4h0M458.1 476.1h0M526.5 378.1h0M471.6 135.4h0M624.6 291.7h0M377.7 402.5h0M661.9 286.4h0M443.2 368.7h0M457.2 273.5h0M692.1 203.6h0M314.3 351.0h0M432.1 131.9h0M287.1 467.1h0M463.7 160.5h0M292.6 95.0h0M375.2 184.3h0M680.7 268.0h0M456.3 423.6h0M437.1 143.4h0M495.2 488.8h0M448.5 169.1h0M560.8 481.5h0M302.6 451.9h0M408.2 180.0h0M438.2 136.5h0M285.2 89.7h0M367.3 481.8h0M487.3 495.6h0M280.5 124.8h0M449.0 312.1h0M613.2 293.4h0M723.6 435.0h0M500.1 334.0h0M524.0 336.9h0M460.7 474.2h0M554.3 473.4h0M320.2 47.2h0M370.3 264.1h0M679.5 294.5h0M703.4 169.5h0M709.6 448.4h0M398.4 452.5h0M318.3 291.9h0M323.1 489.4h0M330.4 438.0h0M651.2 207.7h0M294.5 70.1h0M697.3 156.1h0M427.4 52.0h0M459.8 425.1h0M435.2 469.4h0M296.0 122.1h0M714.5 42.9h0M624.0 421.2h0M441.6 312.5h0M393.3 189.2h0M629.8 258.5h0M612.3 400.0h0M286.5 249.9h0M481.5 448.0h0M701.7 213.7h0M577.9 388.8h0M377.6 339.6h0M702.1 90.1h0M319.9 56.9h0M455.0 313.8h0M289.6 100.6h0M543.0 167.8h0M424.7 436.5h0M370.0 404.2h0M549.5 459.4h0M421.1 199.2h0M282.6 208.9h0M718.3 425.8h0M349.4 67.9h0M705.5 49.5h0M436.6 399.3h0M617.5 398.6h0M592.6 426.3h0M285.0 424.0h0M273.6 299.6h0M590.6 260.4h0M639.3 125.1h0M329.9 93.6h0M459.2 448.9h0M638.5 251.8h0M410.3 44.4h0M271.2 489.6h0M388.8 465.4h0M484.6 463.2h0M279.3 346.5h0M524.9 222.6h0M595.8 333.9h0M468.1 180.4h0M458.1 377.3h0M399.1 495.4h0M707.7 360.1h0M386.2 408.9h0M395.6 275.1h0M573.8 415.4h0M693.3 323.2h0M708.6 303.4h0M500.0 214.5h0M339.1 220.2h0M560.2 100.5h0M432.4 71.7h0M654.2 447.4h0M372.4 458.4h0M635.4 115.8h0M319.3 55.3h0M504.3 437.3h0M470.6 55.4h0M675.1 61.2h0M520.4 37.6h0M318.5 258.0h0M405.9 359.2h0M272.8 220.8h0M503.5 207.7h0M442.4 112.8h0M390.1 222.6h0M432.5 105.9h0M319.1 293.3h0M348.4 415.3h0M475.0 447.9h0M382.3 162.3h0M436.7 55.0h0M286.9 96.6h0M677.9 188.7h0M487.4 266.6h0M344.6 105.2h0M425.3 170.9h0M357.1 317.5h0M550.2 119.4h0M358.2 420.5h0M399.3 98.0h0M392.1 352.5h0M382.3 431.3h0M520.5 350.6h0M404.8 227.3h0M605.0 86.9h0M354.7 365.9h0M627.5 276.3h0M397.1 230.1h0M306.3 246.3h0M528.9 49.4h0M642.8 235.7h0M381.8 383.7h0M610.4 165.2h0M648.8 401.8h0M520.3 168.4h0M445.6 424.3h0M467.5 382.2h0M388.0 128.6h0M293.6 375.8h0M458.7 444.6h0M324.3 445.8h0M684.2 298.1h0M619.0 157.6h0M676.5 73.7h0M689.9 255.7h0M289.1 497.9h0M656.0 85.5h0M390.8 397.8h0M695.9 439.9h0M446.4 324.2h0M344.0 237.9h0M714.7 128.7h0M500.9 260.2h0M661.8 231.3h0M440.5 77.9h0M387.8 478.8h0M605.8 45.6h0M449.8 439.0h0M514.2 273.3h0M688.1 466.6h0M693.4 169.1h0M293.8 176.4h0M660.5 43.4h0M272.7 126.8h0M369.2 94.3h0M334.5 486.5h0M678.8 455.9h0M663.9 157.6h0M301.5 44.2h0M464.9 364.9h0M303.4 228.2h0M535.9 49.0h0M591.1 115.6h0M629.7 421.5h0M296.4 148.8h0M604.1 101.5h0M457.6 263.4h0M283.9 221.8h0M679.7 35.0h0M450.3 133.3h0M264.9 139.3h0M411.1 384.1h0M498.2 83.9h0M358.8 88.2h0M441.4 496.0h0M378.2 151.2h0M355.3 382.3h0M547.7 234.6h0M325.0 115.5h0M481.4 53.9h0M373.3 356.4h0M458.4 68.0h0M534.9 227.6h0M644.8 143.8h0M602.4 66.2h0M341.9 171.5h0M617.6 225.3h0M346.7 319.3h0M695.7 428.1h0M310.3 167.3h0M292.5 470.6h0M657.5 241.9h0M272.4 421.6h0M492.9 340.0h0M397.3 222.9h0M568.8 101.0h0M394.3 56.0h0M317.5 453.3h0M371.5 75.4h0M495.0 143.8h0M686.4 106.3h0M355.2 233.2h0M426.6 293.5h0M522.6 93.9h0M510.8 266.3h0M437.6 188.8h0M717.5 236.3h0M291.7 106.6h0M520.7 328.8h0M646.6 485.9h0M653.3 271.7h0M328.4 265.0h0M441.6 343.7h0M283.9 212.6h0M630.0 93.4h0M419.3 476.2h0M713.7 398.9h0M408.6 162.1h0M317.6 496.0h0M503.3 322.4h0M678.4 51.0h0M465.6 473.0h0M516.5 235.9h0M279.6 441.6h0M476.8 245.2h0M529.6 405.1h0M341.3 386.1h0M379.5 154.7h0M533.1 286.5h0M654.3 143.2h0M456.9 101.4h0M705.1 356.6h0M547.9 392.7h0M294.0 107.0h0M672.1 115.9h0M661.6 346.4h0M699.5 389.3h0M535.7 275.7h0M523.4 401.2h0M316.2 455.1h0M616.3 134.4h0M470.1 495.1h0M590.5 178.0h0M368.0 410.2h0M611.9 222.1h0M423.7 167.3h0M409.0 198.2h0M281.1 197.8h0M403.5 341.2h0M430.6 358.0h0M465.5 410.3h0M513.9 266.5h0M370.6 342.4h0M667.3 436.3h0M510.6 166.7h0M451.7 184.4h0M578.3 388.0h0M646.6 51.9h0M319.0 237.9h0M566.0 402.4h0M668.3 243.4h0M523.3 375.6h0M383.1 386.1h0M696.6 422.7h0M280.6 481.3h0M567.1 191.0h0M545.0 463.7h0M326.7 174.4h0M659.7 467.4h0M534.0 296.2h0M485.3 437.9h0M641.4 252.3h0M666.0 124.2h0M639.5 41.7h0M330.0 226.5h0M662.5 379.8h0M661.9 327.1h0M494.6 283.1h0M701.8 241.8h0M521.2 207.4h0M645.0 125.3h0M284.7 384.9h0M587.7 305.5h0M631.1 35.9h0M383.9 218.7h0M676.5 178.9h0M304.8 316.0h0M277.9 85.7h0M606.4 102.6h0M340.0 276.7h0M301.4 97.0h0M438.0 309.6h0M417.3 121.5h0M687.4 449.4h0M325.1 487.4h0M450.1 377.3h0M701.9 346.3h0M459.0 46.5h0M606.2 87.8h0M625.8 195.9h0M282.5 287.8h0M696.6 439.0h0M666.6 376.3h0M305.5 437.8h0M531.7 205.5h0M386.4 394.3h0M635.8 226.2h0M400.0 55.9h0M448.0 131.1h0M459.3 62.3h0M475.5 315.9h0M355.5 188.2h0M312.1 458.3h0M618.0 348.0h0M540.5 245.5h0M356.9 442.0h0M515.0 242.3h0M469.6 289.4h0M392.8 496.7h0M353.2 348.2h0M360.5 466.0h0M537.7 248.2h0M405.6 173.6h0M582.5 360.9h0M496.4 427.1h0M324.5 107.4h0M698.6 160.9h0M374.9 140.7h0M285.8 403.8h0M372.3 227.4h0M684.3 327.7h0M317.5 320.9h0M654.2 170.9h0M363.1 466.6h0M703.2 337.2h0M523.5 350.1h0M688.8 146.4h0M665.1 202.2h0M598.2 158.1h0M547.7 441.6h0M383.0 473.8h0M278.4 210.2h0M317.2 64.0h0M580.8 353.3h0M591.1 461.6h0M694.2 119.7h0M439.2 402.3h0M352.7 447.0h0M647.6 280.0h0M498.6 453.7h0M321.4 413.5h0M282.7 181.7h0M312.0 146.0h0M395.1 225.9h0M571.1 276.0h0M376.6 83.1h0M533.0 274.9h0M673.2 331.3h0M334.5 400.1h0M665.4 179.8h0M638.4 342.7h0M564.6 174.8h0M677.4 304.7h0M337.2 55.2h0M539.7 464.8h0M693.8 118.2h0M612.9 351.2h0M516.5 335.9h0M617.9 443.0h0M335.5 56.9h0M372.2 399.9h0M590.3 257.5h0M396.2 112.4h0M480.2 145.4h0M710.2 369.2h0M292.7 303.7h0M334.3 226.5h0M527.0 63.5h0M577.0 319.8h0M719.7 462.3h0M714.1 418.4h0M271.1 384.4h0M675.3 90.6h0M350.3 264.1h0M588.2 58.8h0M345.8 433.6h0M446.4 199.2h0M647.4 429.9h0M692.8 201.4h0M616.1 287.2h0M618.8 273.7h0M590.0 115.8h0M289.7 96.8h0M554.8 239.3h0M334.8 402.2h0M519.2 185.5h0M417.8 162.7h0M440.9 91.2h0M410.4 206.2h0M500.8 51.2h0M702.4 464.4h0M406.4 182.9h0M433.5 418.3h0M374.1 258.8h0M533.2 229.1h0M577.0 397.9h0M650.6 463.2h0M542.9 308.1h0M678.1 335.0h0M677.0 333.9h0M595.1 134.8h0M401.5 481.2h0M615.9 454.4h0M674.6 424.3h0M632.2 401.9h0M486.0 478.1h0M617.4 389.9h0M346.4 454.4h0M399.0 386.8h0M581.3 247.3h0M644.1 83.8h0M510.4 63.1h0M640.7 237.2h0M488.3 86.5h0M378.2 42.8h0M636.5 382.2h0M652.2 492.0h0M528.1 337.9h0M573.1 222.6h0M420.2 485.8h0M562.3 367.6h0M343.6 470.6h0M445.6 457.9h0M584.1 275.8h0M331.7 401.8h0M598.8 481.8h0M626.2 57.0h0M554.4 407.9h0M358.2 425.4h0M478.0 477.2h0M370.8 174.2h0M671.4 174.2h0M282.2 387.8h0M493.4 133.3h0M679.9 490.8h0M584.3 207.7h0M384.4 92.8h0M372.1 42.7h0M385.4 89.8h0M382.0 224.5h0M683.4 111.4h0M431.3 283.8h0M287.7 372.5h0M692.8 244.4h0M456.3 271.6h0M504.2 174.5h0M602.6 255.6h0M617.7 222.2h0M615.2 191.5h0M663.6 226.2h0M390.2 337.2h0M572.9 352.3h0M451.8 394.2h0M707.2 428.9h0M539.0 207.4h0M587.3 481.1h0M437.7 275.3h0M307.6 361.0h0M558.8 374.7h0M699.8 442.5h0M394.7 348.9h0M651.3 463.9h0M276.6 364.9h0M648.4 420.4h0M466.2 295.0h0M647.0 250.4h0M704.8 421.0h0M650.4 81.0h0M614.5 332.3h0M310.1 305.0h0M512.0 184.7h0M568.4 291.1h0M501.1 297.5h0M420.0 220.1h0M477.9 344.9h0M341.9 224.0h0M620.5 40.3h0M580.5 46.3h0M387.5 437.5h0M507.5 325.8h0M586.2 138.9h0M459.6 430.8h0M454.7 436.8h0M448.8 54.0h0M302.9 315.5h0M270.5 499.8h0M313.5 264.5h0M642.2 455.2h0M321.4 62.6h0M551.9 408.3h0M367.4 240.1h0M382.7 326.6h0M307.8 196.4h0M273.8 258.8h0M304.1 94.4h0M426.1 237.5h0M365.7 185.4h0M712.5 410.3h0M326.9 362.8h0M675.3 360.7h0M289.3 179.7h0M561.2 391.2h0M282.5 232.3h0M621.0 377.8h0M332.5 439.9h0M529.9 50.9h0M425.7 360.4h0M592.6 169.0h0M447.5 490.6h0M263.6 69.9h0M707.6 478.9h0M430.9 447.6h0M377.2 441.2h0M704.8 387.3h0M298.2 454.0h0M427.3 376.6h0M415.4 221.3h0M702.4 97.6h0M477.2 437.0h0M627.4 239.4h0M385.2 483.7h0M634.4 57.8h0M381.6 481.1h0M505.9 486.7h0M612.4 298.5h0M390.2 221.4h0M284.9 348.2h0M334.5 254.1h0M606.7 133.8h0M470.5 484.5h0M646.7 392.5h0M540.8 220.3h0M420.9 78.9h0M623.1 70.5h0M667.4 308.7h0M361.5 392.7h0M618.9 226.8h0M588.3 274.0h0M467.1 117.5h0M550.8 210.9h0M266.1 67.7h0M475.9 126.3h0M273.4 80.7h0M406.0 173.3h0M600.8 456.4h0M316.5 265.6h0M414.7 330.1h0M324.6 500.1h0M701.9 40.5h0M338.1 382.2h0M322.1 458.5h0M597.2 436.0h0M713.4 345.0h0M372.1 448.3h0M726.8 477.2h0M456.0 41.7h0M289.9 257.8h0M538.4 136.2h0M428.6 101.2h0M370.5 421.8h0M697.5 80.3h0M597.9 273.9h0M693.4 54.6h0M281.1 469.1h0M651.5 233.6h0M494.8 272.4h0M431.8 413.2h0M392.9 160.8h0M465.5 323.8h0M704.3 310.9h0M721.9 306.1h0M378.8 184.9h0M357.4 280.1h0M695.7 402.5h0M624.9 327.2h0M273.7 452.9h0M667.9 90.6h0M315.9 213.1h0M672.6 482.4h0M329.2 157.0h0M272.2 224.8h0M497.5 322.6h0M436.7 59.7h0M340.5 142.2h0M560.0 255.8h0M540.7 130.4h0M585.3 303.9h0M589.1 98.8h0M268.7 210.0h0M496.1 394.2h0M531.7 295.6h0M550.6 144.7h0M625.7 50.1h0M391.5 270.8h0M553.5 424.9h0M596.2 476.5h0M333.8 215.3h0M656.0 357.3h0M538.9 371.6h0M670.6 118.1h0M633.2 186.9h0M441.5 151.0h0M565.5 395.6h0M555.3 194.6h0M495.3 415.0h0M574.6 197.1h0M686.3 346.6h0M429.1 118.3h0M486.9 269.4h0M633.6 396.8h0M443.3 266.1h0M531.9 121.9h0M555.1 306.4h0M529.8 200.0h0M571.9 359.6h0M409.1 438.0h0M575.0 345.5h0M397.6 337.1h0M459.6 479.6h0M544.7 392.4h0M385.8 438.5h0M473.7 354.5h0M684.2 294.1h0M452.7 398.5h0M689.5 305.9h0M465.3 209.4h0M508.7 200.1h0M338.7 329.2h0M582.8 426.5h0M327.6 218.0h0M629.5 294.0h0M506.4 250.2h0M390.7 338.8h0M430.2 423.8h0M500.0 374.1h0M426.4 218.8h0M700.4 79.3h0M585.4 235.2h0M457.4 376.0h0M477.9 383.3h0M525.5 349.5h0M719.9 294.7h0M368.0 353.1h0M402.1 110.8h0M698.1 431.4h0M496.9 324.5h0M338.4 383.4h0M414.7 463.2h0M691.2 411.5h0M506.0 285.0h0M541.6 353.7h0M621.5 172.7h0M504.4 250.2h0M599.4 313.1h0M408.8 208.6h0M349.7 258.9h0M560.0 188.9h0M461.6 276.0h0M613.5 342.0h0M647.1 392.5h0M646.9 410.4h0M480.5 345.1h0M603.3 307.6h0M470.6 270.3h0M446.1 392.8h0M665.0 207.7h0M578.4 297.9h0M373.9 131.3h0M528.0 378.0h0M489.7 237.9h0M425.5 252.2h0M568.3 372.3h0M575.8 255.4h0M626.3 374.9h0M551.1 453.9h0M471.7 209.1h0M511.6 437.3h0M482.3 458.3h0M285.6 394.2h0M551.6 134.4h0M699.3 182.1h0M556.0 283.2h0M690.9 234.6h0M649.3 196.5h0M701.4 244.5h0M317.5 180.9h0M339.5 246.6h0M523.4 384.8h0M614.7 381.3h0M556.3 122.9h0M555.9 207.3h0M715.0 487.1h0M570.4 204.3h0M652.7 34.8h0M332.5 201.4h0M694.3 349.6h0M528.0 102.8h0M529.0 475.0h0M549.4 398.0h0M526.6 71.7h0M397.3 239.2h0M396.5 428.5h0M465.2 268.8h0M424.9 172.5h0M619.2 167.4h0M709.8 235.2h0M514.6 250.3h0M552.6 77.9h0M472.7 405.5h0M661.5 350.5h0M458.5 265.0h0M337.6 447.7h0M463.8 253.2h0M571.1 486.2h0M432.7 288.0h0M537.1 366.7h0M668.2 139.5h0M594.2 117.0h0M567.1 324.9h0M479.9 132.4h0M623.9 114.8h0M366.1 381.8h0M558.1 292.6h0M410.8 198.4h0M339.3 304.9h0M464.8 342.0h0M274.0 332.8h0M609.8 170.7h0M599.3 219.7h0M421.0 408.1h0M454.2 320.8h0M660.6 403.9h0M558.6 451.9h0M451.7 412.0h0M583.4 318.8h0M592.8 309.5h0M424.2 221.8h0M593.6 267.2h0M402.3 308.6h0M584.0 188.7h0M459.7 399.5h0M625.7 229.2h0M619.0 352.9h0M506.1 219.9h0M468.2 281.4h0M352.2 375.0h0M667.9 379.1h0M535.0 437.5h0M513.6 286.0h0M374.2 357.5h0M674.2 287.9h0M711.2 127.7h0M625.3 193.8h0M582.9 384.7h0M562.1 329.6h0M338.2 377.1h0M463.3 97.6h0M543.0 368.5h0M666.6 333.0h0M526.4 192.9h0M511.9 451.6h0M689.2 102.6h0M503.7 107.9h0M507.7 279.0h0M515.7 284.6h0M612.5 314.8h0M495.2 220.2h0M548.1 299.8h0M292.1 264.5h0M657.0 420.5h0M496.9 460.0h0M407.2 237.0h0M557.4 358.9h0M433.5 388.2h0M467.9 380.7h0M417.7 330.3h0M464.9 195.0h0M591.5 313.3h0M649.2 310.0h0M417.9 326.8h0M333.3 230.3h0M361.0 343.5h0M530.2 299.0h0M518.5 362.5h0M302.0 226.9h0M350.5 176.1h0M279.8 475.9h0M427.6 81.3h0M574.5 372.3h0M497.9 219.7h0M489.5 149.3h0M661.5 281.4h0M408.8 286.6h0M583.8 250.4h0M629.4 278.3h0M586.1 412.1h0M538.9 441.2h0M440.1 197.2h0M411.7 257.0h0M498.6 433.5h0M338.8 295.0h0M640.0 303.6h0M449.1 278.6h0M555.1 90.3h0M429.5 309.4h0M611.2 395.1h0M268.8 426.3h0M603.5 171.8h0M689.3 416.2h0M398.8 163.5h0M478.4 318.0h0M617.9 394.6h0M523.3 309.1h0M594.4 190.5h0M499.4 181.2h0M468.2 394.2h0M485.0 341.6h0M613.0 366.4h0M400.9 494.5h0M526.4 325.5h0M433.7 258.9h0M551.9 468.8h0M532.1 380.4h0M558.3 81.8h0M589.3 233.5h0M415.3 392.7h0M500.6 404.2h0M459.6 304.1h0M397.8 291.3h0M642.7 293.7h0M684.5 325.2h0M334.3 120.8h0M467.9 236.2h0M480.5 395.8h0M492.4 148.8h0M324.1 409.7h0M524.2 176.8h0M562.8 373.3h0M443.8 384.2h0M529.8 338.5h0M397.2 246.0h0M636.9 259.9h0M409.6 466.6h0M491.8 388.4h0M452.9 252.3h0M315.8 282.4h0M520.8 312.3h0M471.2 334.1h0M502.4 263.3h0M691.1 415.4h0M694.9 248.7h0M620.7 348.4h0M455.5 483.1h0M482.3 285.4h0M469.9 359.3h0M533.6 260.6h0M490.3 214.4h0M571.7 262.4h0M698.7 359.8h0M558.0 359.7h0M631.7 83.7h0M603.5 85.3h0M516.8 182.4h0M591.5 246.5h0M696.5 111.7h0M627.4 246.2h0M669.3 249.6h0M470.2 364.1h0M322.4 175.1h0M484.2 251.1h0M499.3 244.6h0M568.9 100.6h0M591.4 316.9h0M676.4 204.3h0M602.1 246.5h0M620.4 476.7h0M497.3 184.4h0M424.2 374.6h0M379.4 46.7h0M691.2 347.1h0M615.2 293.8h0M587.0 348.3h0M554.6 78.6h0M606.1 307.3h0M479.3 212.3h0M410.0 108.0h0M605.6 302.2h0M571.0 225.7h0M439.9 265.1h0M619.1 385.3h0M690.3 335.9h0M559.7 192.4h0M503.3 267.8h0M283.4 355.3h0M419.2 247.9h0M492.8 486.5h0M603.9 208.2h0M637.3 275.4h0M609.3 306.2h0M460.4 146.9h0M510.0 203.1h0M669.4 210.6h0M647.9 140.5h0M538.5 329.3h0M425.9 298.7h0M458.2 146.0h0M590.5 146.2h0M532.4 330.3h0M564.5 233.7h0M408.7 337.6h0M382.0 139.0h0M688.5 243.7h0M508.5 250.4h0M511.7 353.4h0M478.7 132.7h0M661.6 260.0h0M393.3 412.9h0M714.3 211.0h0M434.8 292.6h0M656.8 308.9h0M475.4 333.7h0M591.3 111.0h0M418.3 465.2h0M471.1 115.4h0M284.0 143.5h0M537.2 177.5h0M625.0 382.1h0M560.7 313.6h0M576.8 338.1h0M573.2 171.8h0M472.9 384.2h0M603.7 98.7h0M337.4 294.8h0M435.6 393.3h0M667.6 384.6h0M570.8 488.5h0M531.8 46.1h0M454.5 281.2h0M532.5 477.2h0M595.8 347.7h0M380.2 76.2h0M571.9 230.4h0M420.3 261.2h0M312.3 394.7h0M621.3 278.1h0M691.3 369.4h0M393.2 287.7h0M609.7 320.9h0M673.7 305.7h0M580.2 301.3h0M538.5 370.3h0M544.1 284.7h0M427.1 292.1h0M484.5 297.8h0M585.3 200.4h0M353.9 368.1h0M535.0 83.7h0M448.6 308.1h0M578.5 95.2h0M689.6 370.4h0M439.5 210.5h0M422.0 249.0h0M644.7 361.5h0M377.7 294.6h0M536.2 206.9h0M572.5 439.0h0M488.0 319.1h0M692.9 303.7h0M419.1 285.3h0M610.5 341.1h0M528.9 432.1h0M588.1 145.2h0M703.2 228.5h0M462.3 247.7h0M476.0 199.3h0M518.5 238.5h0M668.6 348.9h0" stroke="#e8e8e8" stroke-width="1.3"/><path d="M339.1 123.4h0M454.8 488.4h0M349.5 394.3h0M702.7 110.1h0M663.0 320.2h0M290.8 488.0h0M504.2 285.5h0M405.9 48.1h0M643.7 140.1h0M264.9 223.3h0M415.0 436.5h0M564.1 54.4h0M621.0 430.7h0M500.7 492.2h0M507.0 236.2h0M698.0 230.7h0M472.6 246.8h0M389.2 45.9h0M549.9 221.8h0M374.5 340.5h0M418.7 257.8h0M451.5 46.4h0M407.1 78.4h0M632.6 50.7h0M383.5 306.7h0M563.2 368.8h0M681.0 275.1h0M411.6 295.9h0M336.0 263.6h0M668.3 408.8h0M331.1 64.0h0M349.7 380.1h0M402.7 444.6h0M404.8 471.7h0M605.6 138.6h0M309.0 368.0h0M446.3 46.0h0M446.8 203.0h0M444.6 239.7h0M281.6 178.3h0M675.1 337.1h0M600.9 233.3h0M562.1 136.8h0M594.6 221.8h0M659.5 354.5h0M722.7 285.8h0M595.6 430.2h0M422.5 345.4h0M553.7 157.6h0M456.1 440.2h0M325.7 489.0h0M499.4 424.5h0M689.4 343.0h0M656.3 334.7h0M390.9 306.3h0M605.2 368.6h0M447.4 380.2h0M424.1 211.8h0M689.4 85.8h0M425.0 129.3h0M302.8 50.3h0M707.5 58.5h0M576.5 114.9h0M378.3 42.2h0M507.1 153.3h0M490.5 480.4h0M641.9 427.8h0M697.3 278.0h0M494.1 279.2h0M600.2 74.7h0M571.2 215.7h0M593.9 254.4h0M486.4 77.0h0M437.2 54.3h0M558.3 272.7h0M352.0 61.9h0M269.8 195.6h0M499.4 58.7h0M652.4 60.1h0M322.3 269.3h0M555.1 173.3h0M464.2 463.6h0M663.6 315.0h0M667.0 48.3h0M293.1 376.4h0M331.8 84.2h0M484.6 269.9h0M617.5 171.3h0M694.0 198.7h0M501.5 389.3h0M391.8 348.5h0M276.1 155.4h0M383.3 280.6h0M566.0 216.2h0M284.3 56.8h0M367.7 487.0h0M604.2 358.3h0M297.9 409.3h0M561.4 457.2h0M303.3 462.0h0M358.5 415.5h0M346.9 296.4h0M352.4 472.3h0M310.3 363.3h0M479.6 156.4h0M595.3 278.8h0M353.2 251.4h0M309.7 279.9h0M710.3 403.6h0M636.9 149.2h0M350.5 374.0h0M655.7 299.8h0M567.8 327.1h0M578.0 385.2h0M670.4 160.8h0M668.4 50.5h0M649.7 258.4h0M504.9 282.4h0M535.8 405.4h0M341.2 92.6h0M482.3 283.2h0M416.3 497.9h0M298.7 426.5h0M484.6 484.6h0M373.2 236.4h0M412.5 316.3h0M379.4 301.3h0M454.5 177.6h0M480.2 285.8h0M542.1 436.4h0M296.2 349.0h0M469.9 104.5h0M433.2 319.2h0M314.1 355.1h0M396.1 443.3h0M280.8 394.4h0M369.6 440.6h0M353.6 171.9h0M381.5 40.8h0M700.4 322.8h0M360.7 370.1h0M359.3 223.9h0M570.8 62.0h0M527.9 56.6h0M717.3 311.2h0M515.8 173.7h0M492.2 196.1h0M379.7 62.2h0M364.8 144.4h0M304.5 279.6h0M285.0 452.1h0M589.2 365.0h0M456.7 361.5h0M360.5 322.3h0M397.4 121.4h0M541.0 370.7h0M326.8 184.9h0M323.7 247.1h0M595.5 354.9h0M266.1 219.1h0M565.3 277.4h0M537.7 95.7h0M364.4 333.3h0M661.3 450.0h0M516.6 419.6h0M410.0 352.5h0M361.6 224.2h0M511.2 250.3h0M360.1 477.1h0M391.5 58.6h0M271.3 272.0h0M681.9 487.1h0M392.7 414.0h0M555.5 90.6h0M568.5 44.3h0M574.1 48.6h0M599.3 151.0h0M555.9 481.5h0M611.0 53.7h0M420.9 450.4h0M392.5 205.7h0M380.7 201.7h0M487.7 200.0h0M456.7 424.2h0M449.7 397.2h0M596.7 183.1h0M687.2 307.3h0M454.7 481.0h0M640.1 311.8h0M570.7 325.7h0M472.2 295.8h0M644.0 318.2h0M361.0 284.5h0M342.2 142.7h0M651.1 248.4h0M598.2 333.5h0M446.4 356.2h0M695.6 294.3h0M425.0 393.8h0M493.8 334.9h0M450.3 231.8h0M540.1 378.9h0M492.5 163.6h0M520.5 270.6h0M393.0 300.8h0M422.0 221.3h0M626.0 256.5h0M524.0 433.0h0M458.6 420.5h0M415.0 361.5h0M551.1 300.9h0M492.3 313.4h0M619.8 118.3h0M639.4 460.9h0M594.5 296.5h0M360.6 173.3h0M412.4 441.0h0M402.9 271.2h0M353.2 364.6h0M413.0 88.4h0M608.5 187.5h0M625.0 338.0h0M467.2 425.3h0M593.9 372.5h0M532.8 221.8h0M338.1 143.3h0M455.0 393.8h0M713.3 358.7h0M512.4 89.9h0M717.7 473.9h0M697.7 451.2h0M371.0 326.7h0M275.6 358.5h0M409.1 446.9h0M384.2 292.2h0M711.9 263.9h0M532.8 261.5h0M556.3 325.4h0M557.2 276.6h0M497.1 314.6h0M537.0 265.6h0M496.4 492.3h0M501.2 256.9h0M315.9 105.3h0M588.4 183.4h0M671.6 277.2h0M682.7 250.4h0M386.7 216.5h0M638.5 213.9h0M469.3 174.1h0M486.5 415.9h0M557.1 300.5h0M511.7 224.9h0M479.3 164.4h0M311.7 430.6h0M579.2 300.4h0M536.7 415.1h0M551.3 342.5h0M420.4 333.6h0M616.2 230.0h0M594.4 376.1h0M348.0 282.8h0M316.1 393.9h0M512.3 203.6h0M664.2 226.6h0M522.1 229.1h0M435.7 369.1h0M420.8 229.4h0M503.7 402.4h0M542.1 246.5h0M598.0 126.4h0M524.5 125.7h0M576.4 469.9h0M426.2 373.2h0M543.9 361.2h0M502.6 60.1h0M605.5 286.3h0M579.8 290.8h0M263.0 49.8h0M397.2 442.3h0M623.9 430.1h0M594.9 384.3h0M532.2 231.7h0M491.2 301.6h0M597.6 40.8h0M446.7 291.3h0M475.0 422.8h0M380.7 139.1h0M542.2 318.9h0M465.2 226.8h0M412.0 460.3h0M489.5 242.5h0M447.9 198.4h0M562.1 381.3h0M550.3 314.5h0M454.9 316.3h0M408.5 293.8h0M632.4 412.2h0M493.6 432.3h0M667.9 430.4h0M518.6 246.6h0M386.3 166.8h0M418.1 264.5h0M642.6 186.8h0M275.3 371.0h0M692.5 285.9h0M405.4 146.1h0M698.0 179.3h0M396.6 246.7h0M429.4 210.8h0M427.0 358.1h0M587.1 182.7h0M406.3 289.1h0M582.0 164.1h0M629.9 97.0h0M695.1 393.0h0M622.2 382.4h0M540.1 336.3h0M700.1 128.7h0M521.7 445.8h0M481.1 403.1h0M563.3 219.2h0M523.4 204.1h0M410.0 268.8h0M651.4 252.6h0M363.4 259.8h0M297.8 274.1h0M503.7 175.9h0M531.7 338.8h0M695.9 42.9h0M555.3 272.2h0M602.6 208.8h0M558.8 227.3h0M391.6 396.8h0" stroke="#fff" stroke-width="1.7"/><path d="M337.3 43.0h0M469.0 40.6h0M496.0 40.6h0M564.4 42.0h0M394.5 192.0h0M264.0 226.0h0M361.7 96.8h0M320.2 115.3h0M571.7 349.0h0" stroke="#fff" stroke-width="1.7999999999999998"/><path d="M548.8 80.7h0M402.3 101.7h0M517.0 115.3h0M627.9 116.3h0M637.6 113.4h0M606.9 132.9h0M460.4 142.2h0M629.3 34.3h0M566.8 167.6h0M649.8 177.3h0M420.3 195.4h0M432.5 203.2h0M298.3 178.3h0M720.6 224.7h0M674.3 243.3h0M543.4 214.0h0M588.8 213.0h0M415.5 218.8h0M517.0 244.7h0M532.6 255.5h0M569.3 243.3h0M405.7 243.3h0M381.3 282.1h0M453.5 273.3h0M446.2 306.5h0M486.3 305.0h0M547.3 306.5h0M493.6 334.3h0M344.7 334.3h0M338.8 309.9h0M330.0 280.6h0M620.5 322.1h0M641.5 322.1h0M710.9 319.7h0M481.4 357.3h0M524.3 356.3h0M569.3 339.2h0M607.4 352.4h0M378.8 389.0h0M564.4 388.0h0M518.0 398.8h0M431.6 402.7h0M402.3 423.7h0M514.6 422.2h0M618.1 411.0h0M661.0 415.9h0M692.3 435.4h0M277.3 285.5h0M270.4 391.5h0M310.5 412.5h0M359.3 414.9h0M530.2 459.8h0M569.3 453.0h0M460.4 486.7h0M671.8 488.1h0M310.5 498.9h0M588.8 439.3h0M706.0 346.5h0M637.6 372.0h0" stroke="#fff" stroke-width="2.5999999999999996"/><path d="M627.9 62.6h0M594.7 267.0h0M652.3 303.6h0M435.0 335.3h0M482.8 440.3h0" stroke="#fff" stroke-width="5.2"/></g><path d="M621.4 62.6h13M627.9 56.1v13M588.2 267.0h13M594.7 260.5v13M645.8 303.6h13M652.3 297.1v13M428.5 335.3h13M435.0 328.8v13M476.3 440.3h13M482.8 433.8v13" stroke="#b0b0b0" stroke-width="1.1" fill="none" filter="url(#b2)"/><path d="M496.6 200.9h0M491.1 205.5h0M479.5 199.5h0M505.5 190.9h0M493.2 198.8h0M466.5 190.6h0M469.5 198.0h0M478.7 200.3h0M475.6 208.7h0M482.7 208.6h0M478.1 198.8h0M471.1 202.0h0M490.4 197.7h0M468.7 196.7h0M470.7 206.3h0M470.7 206.9h0M476.8 167.5h0M479.6 165.1h0M495.2 182.4h0M471.0 181.5h0M500.4 184.8h0M489.2 173.7h0" stroke="#f0f0f0" stroke-width="1.6" stroke-linecap="round" fill="none"/></svg>
<svg style="left:0;top:0" width="988" height="534"><path d="M15.1 0V534M307.6 0V534M600.2 0V534M892.8 0V534M0 249.7H988" stroke="#222" stroke-width="1.2" fill="none"/></svg>
<svg style="left:714px;top:262px" width="8" height="8"><circle cx="4.3" cy="4" r=".9" fill="#ddd"/></svg>
<div class="t lb" style="left:3.5px;top:522.7px;background:#000">177°40'</div>
<div class="t lb" style="left:296.3px;top:522.7px;background:#000">178°00'</div>
<div class="t lb" style="left:588.8px;top:522.7px;background:#000">178°20'</div>
<div class="t lb" style="left:881.4px;top:522.7px;background:#000">178°40'</div>
<div class="t lb" style="left:962.7px;top:241.7px">+27°20'</div>
<div class="t lb" style="left:722.0px;top:263.1px;font-size:9.2px;transform:none;color:#e8e8e0">M 46</div>
</div>
<div id="vs"><svg style="left:0;top:0" width="9" height="534"><path d="M2.4 6.6H6.2L4.3 4.4Z" fill="#111"/><path d="M0 11.5H9" stroke="#d8d8d8" stroke-width="1"/><path d="M0 190.5H9" stroke="#d0d0d0" stroke-width="1"/><path d="M2.2 527.4H6.2L4.2 529.8Z" fill="#111"/></svg></div>
<div id="hs"><svg style="left:0;top:0" width="997" height="9"><path d="M0 .5H997" stroke="#fbfbfb" stroke-width="1"/><path d="M5.8 2.6V6.6L3.6 4.6Z" fill="#111"/><path d="M10.5 0V9" stroke="#d8d8d8" stroke-width="1"/><rect x="976" y="1" width="10" height="8" fill="#f8f8f8" stroke="#dcdcdc" stroke-width=".8"/><path d="M990.6 2.6V6.6L992.8 4.6Z" fill="#111"/></svg></div>
<div id="right"><div class="t" style="left:0;width:15px;text-align:center;top:2.5px;font:bold 8px 'DejaVu Sans',sans-serif;color:#1a1a78">30'</div><div class="t" style="left:0;width:15px;text-align:center;top:16.5px;font:bold 8px 'DejaVu Sans',sans-serif;color:#1a1a78">1</div><div class="t" style="left:0;width:15px;text-align:center;top:29.5px;font:bold 8px 'DejaVu Sans',sans-serif;color:#1a1a78">2</div><div class="t" style="left:0;width:15px;text-align:center;top:42.5px;font:bold 8px 'DejaVu Sans',sans-serif;color:#1a1a78">5</div><div class="t" style="left:0;width:15px;text-align:center;top:56.5px;font:bold 8px 'DejaVu Sans',sans-serif;color:#1a1a78">10</div><div class="t" style="left:0;width:15px;text-align:center;top:69.5px;font:bold 8px 'DejaVu Sans',sans-serif;color:#1a1a78">20</div><div class="t" style="left:0;width:15px;text-align:center;top:82.5px;font:bold 8px 'DejaVu Sans',sans-serif;color:#1a1a78">45</div><div class="t" style="left:0;width:15px;text-align:center;top:95.5px;font:bold 8px 'DejaVu Sans',sans-serif;color:#1a1a78">90</div><div class="t" style="left:0;width:15px;text-align:center;top:109.5px;font:bold 8px 'DejaVu Sans',sans-serif;color:#1a1a78">180</div><div class="t" style="left:0;width:15px;text-align:center;top:123.5px;font:bold 8px 'DejaVu Sans',sans-serif;color:#1a1a78">310</div><svg style="left:0;top:132px" width="14" height="14"><circle cx="7" cy="7" r="3.6" fill="#e8e8ee" stroke="#666" stroke-width=".8"/></svg><div class="t" style="left:0;width:14px;text-align:center;top:147.6px;font:bold 6.5px 'Liberation Sans',sans-serif;color:#3038c8">N</div><div class="t" style="left:0;width:14px;text-align:center;top:159.6px;font:bold 6.5px 'Liberation Sans',sans-serif;color:#3038c8">S</div><div class="t" style="left:0;width:14px;text-align:center;top:171.6px;font:bold 6.5px 'Liberation Sans',sans-serif;color:#3038c8">E</div><div class="t" style="left:0;width:14px;text-align:center;top:183.6px;font:bold 6.5px 'Liberation Sans',sans-serif;color:#3038c8">W</div><div class="t" style="left:0;width:14px;text-align:center;top:196.6px;font:bold 6.5px 'Liberation Sans',sans-serif;color:#3038c8">Z</div></div>
<div id="panel" style="left:12px;top:67px;width:260px;height:291px;background:#e9e9e9;border-left:2px solid #1c1c1c;border-right:2px solid #a2a2a2;border-bottom:2px solid #989898"><div style="left:-2px;top:0;width:260px;height:13px;background:linear-gradient(#8a8a8a 0,#747474 3px,#5c5c5c 6px,#1e1e1e 7px,#242424 10px,#383838 13px)"></div><div class="t" style="left:0.3px;top:3.85px;font:bold 7.50px 'Liberation Sans',sans-serif;color:#fff;">Détails</div><svg style="left:245.3px;top:3px" width="10" height="10"><circle cx="5" cy="4.6" r="3" fill="#dc3444"/><circle cx="5" cy="4.2" r="1.7" fill="#f4a4ac"/></svg><div style="left:0.0px;top:13.0px;width:256.0px;height:1.0px;background:#f8f8f8"></div><div style="left:5.0px;top:20.0px;width:78.5px;height:21.0px;background:#e6e6e6;border:1px solid #5c5c5c;outline:1px solid #909090;outline-offset:-3px"></div><div style="left:92.0px;top:20.5px;width:76.5px;height:19.5px;background:#e5e5e5;border:1px solid #f6f6f6;box-shadow:0 0 0 1px #dadada"></div><div style="left:177.5px;top:20.5px;width:76.5px;height:19.5px;background:#e5e5e5;border:1px solid #f6f6f6;box-shadow:0 0 0 1px #dadada"></div><div class="t" style="left:22.3px;top:27.19px;font:7.10px 'Liberation Sans',sans-serif;color:#222;">Centrer l'objet</div><div class="t" style="left:114.0px;top:25.68px;font:7.35px 'Liberation Sans',sans-serif;color:#222;">Voisinage</div><div class="t" style="left:204.0px;top:25.68px;font:7.35px 'Liberation Sans',sans-serif;color:#222;">Fermer</div><div style="left:0.0px;top:46.0px;width:244.7px;height:231.2px;background:#fff;overflow:hidden;border-top:1px solid #d4d4d4"><div class="t" style="left:5.4px;top:5.52px;font:bold 15.50px 'Liberation Serif',serif;color:#000;">Amas ouvert</div><div class="t" style="left:5.4px;top:24.49px;font:10.40px 'Liberation Serif',serif;color:#000;"><b>M 46</b></div><div class="t" style="left:5.4px;top:36.89px;font:10.40px 'Liberation Serif',serif;color:#000;"><b>Magnitude:</b> 6.10</div><div class="t" style="left:5.4px;top:48.99px;font:10.40px 'Liberation Serif',serif;color:#000;"><b>Luminosité de surface:</b> 13.00</div><div class="t" style="left:5.4px;top:61.09px;font:10.40px 'Liberation Serif',serif;color:#000;"><b>Dimension:</b> 27.0 x 27.0 '</div><div class="t" style="left:5.4px;top:73.19px;font:10.40px 'Liberation Serif',serif;color:#000;"><b>Angle de position:</b> 90</div><div class="t" style="left:5.4px;top:85.39px;font:10.40px 'Liberation Serif',serif;color:#000;"><b>Classe:</b> III 2 m</div><div class="t" style="left:5.4px;top:97.89px;font:10.40px 'Liberation Serif',serif;color:#000;"><b>Description:</b> !,Cl,vB,vRi,vL</div><div class="t" style="left:5.4px;top:109.49px;font:10.40px 'Liberation Serif',serif;color:#000;">&nbsp;&nbsp;&nbsp;PLNNB NGC 2438 on N edge</div><div class="t" style="left:5.4px;top:121.59px;font:10.40px 'Liberation Serif',serif;color:#000;">&nbsp;&nbsp;&nbsp;150 * 10-13 mag</div><div class="t" style="left:5.4px;top:133.49px;font:10.40px 'Liberation Serif',serif;color:#000;"><b>Name:</b> NGC 2437</div><div class="t" style="left:5.4px;top:145.59px;font:10.40px 'Liberation Serif',serif;color:#000;"><b>Constellation:</b> Puppis</div><div class="t" style="left:5.4px;top:169.69px;font:10.40px 'Liberation Serif',serif;color:#000;"><b>Coordonnées:</b></div><div class="t" style="left:5.4px;top:182.23px;font:10.60px 'Liberation Sans',sans-serif;color:#000;"><b>Date</b> AR: 07h42m07.66s DE:-14°50'01.5"</div><div class="t" style="left:5.4px;top:194.33px;font:10.60px 'Liberation Sans',sans-serif;color:#000;"><b>J2000</b> AR: 07h41m48.00s DE:-14°49'00.0"</div><div class="t" style="left:5.4px;top:206.93px;font:10.60px 'Liberation Sans',sans-serif;color:#000;"><b>Ecliptique</b>&nbsp; L: +120°49'01" B:-35°34'50"</div><div class="t" style="left:5.4px;top:219.63px;font:10.60px 'Liberation Sans',sans-serif;color:#000;"><b>Galactique</b>&nbsp; L: +231°48'49" B:+04°00'28"</div></div><div style="left:244.7px;top:46.5px;width:11.3px;height:230.7px;background:linear-gradient(90deg,#e8e8e8,#fbfbfb 40%,#f2f2f2);border-left:1px solid #e2e2e2"></div><div style="left:245.6px;top:58.0px;width:8.8px;height:111.0px;background:linear-gradient(90deg,#9a9a9a,#8a8a8a 40%,#b4b4b4);border-radius:1.5px"></div><svg style="left:244.7px;top:46.5px" width="12" height="231"><path d="M3.4 6.6L5.6 4.4L7.8 6.6" stroke="#3a4060" stroke-width="1.3" fill="none"/><path d="M3.4 224.2L5.6 226.4L7.8 224.2" stroke="#3a4060" stroke-width="1.3" fill="none"/><path d="M0 219.5H12" stroke="#dcdcdc" stroke-width=".8"/></svg><div style="left:0.0px;top:277.2px;width:256.0px;height:11.8px;background:linear-gradient(#e4e4e4,#fafafa 40%,#f0f0f0)"></div><div style="left:11.6px;top:278.4px;width:212.2px;height:9.2px;background:linear-gradient(#8e8e8e,#a8a8a8 35%,#d6d6d6 80%,#e2e2e2);border-radius:1.5px"></div><svg style="left:0;top:277.2px" width="256" height="12"><path d="M6.4 3.6L4.2 5.8L6.4 8" stroke="#3a4060" stroke-width="1.3" fill="none"/><path d="M238.2 3.6L240.4 5.8L238.2 8" stroke="#3a4060" stroke-width="1.3" fill="none"/><path d="M244.7 0V12" stroke="#dcdcdc" stroke-width=".8"/><path d="M251 7.5h1v1h-1zM253 5.5h1v1h-1zM253 7.5h1v1h-1zM253 9.5h1v1h-1zM251 9.5h1v1h-1zM249 9.5h1v1h-1z" fill="#c4c4c4"/></svg></div>
<div id="status">
<div class="t" style="top:3.28px">Az:+178°28'27.6" +27°18'37.3"</div>
<div class="t" style="top:13.28px">AR: 07h41m09.90s -14°50'37.7"</div>
<div style="left:143px;top:0;width:1px;height:24px;background:#cfcfcf"></div>
<div style="left:144px;top:0;width:1px;height:24px;background:#fafafa"></div>
</div>
</div></body></html>
